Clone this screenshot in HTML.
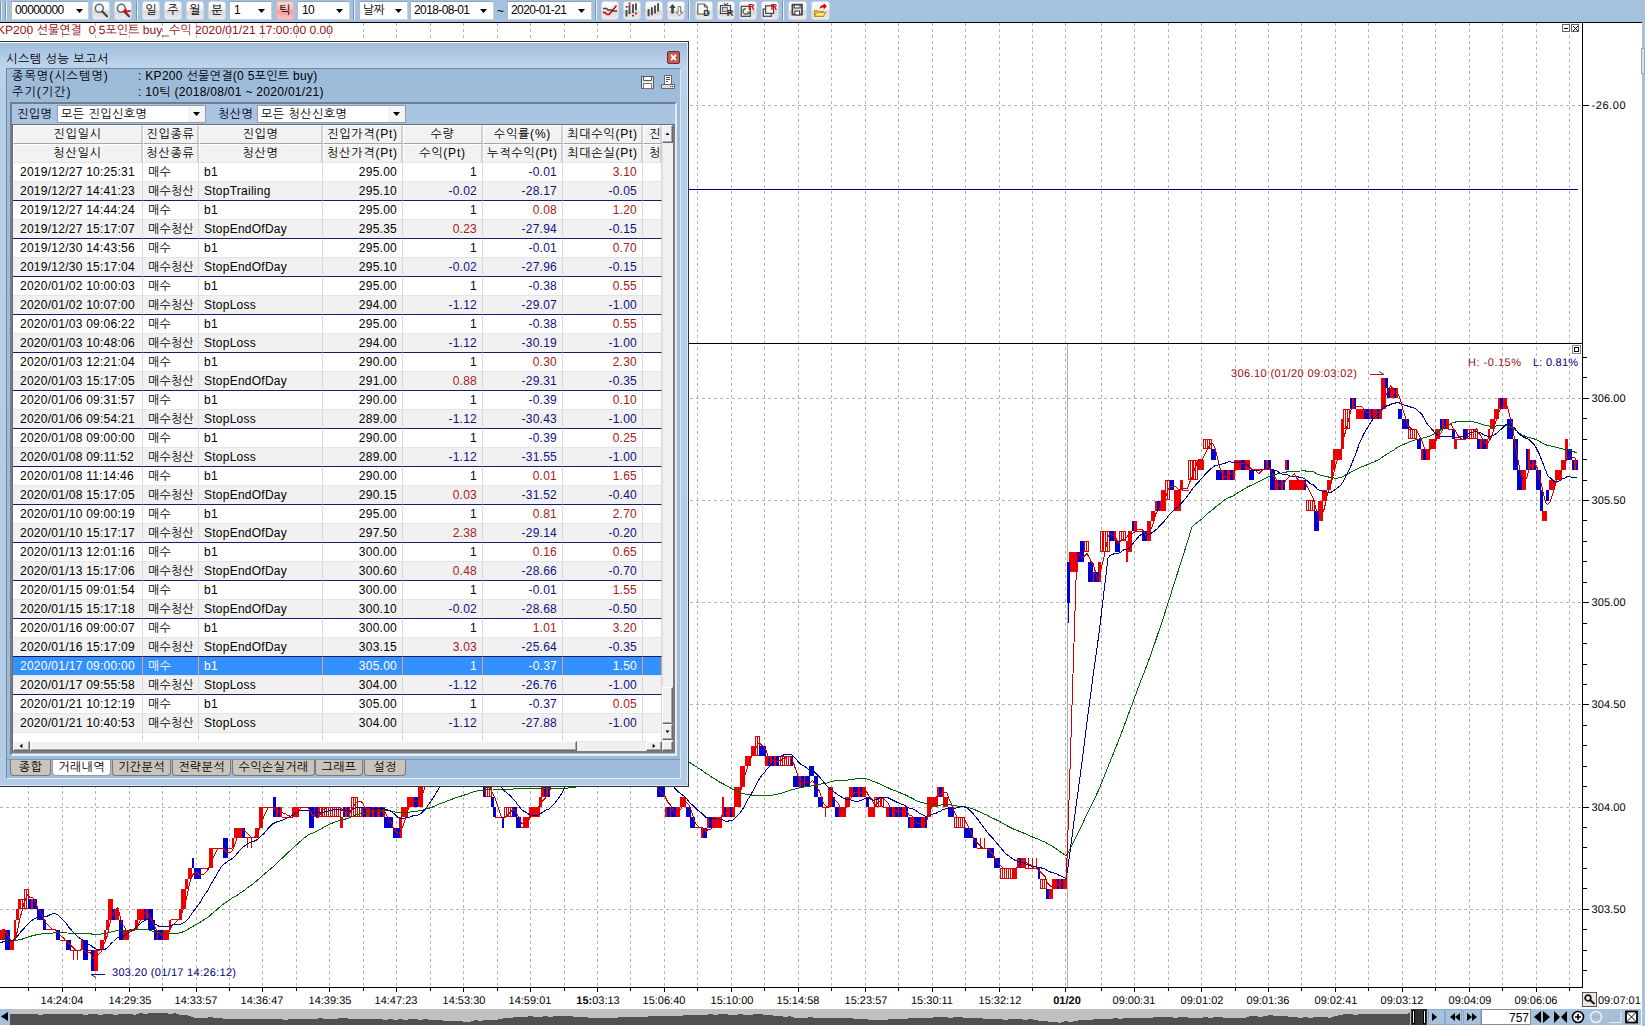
<!DOCTYPE html>
<html lang="ko"><head><meta charset="utf-8"><title>시스템 성능 보고서</title>
<style>
html,body{margin:0;padding:0;background:#fff;}
body{width:1645px;height:1026px;position:relative;overflow:hidden;font:12px 'Liberation Sans','NanumGothic',sans-serif;color:#000;}
div,span{box-sizing:border-box;}
.abs{position:absolute;}
</style></head><body>
<svg id="chart" width="1645" height="1026" viewBox="0 0 1645 1026" style="position:absolute;left:0;top:0" shape-rendering="crispEdges">
<rect x="0" y="23" width="1642" height="1003" fill="#fff"/>
<path d="M28.5 23V987M62.5 23V987M95.5 23V987M129.5 23V987M162.5 23V987M196.5 23V987M229.5 23V987M262.5 23V987M296.5 23V987M329.5 23V987M363.5 23V987M396.5 23V987M430.5 23V987M463.5 23V987M497.5 23V987M530.5 23V987M564.5 23V987M597.5 23V987M630.5 23V987M664.5 23V987M697.5 23V987M731.5 23V987M764.5 23V987M798.5 23V987M831.5 23V987M865.5 23V987M898.5 23V987M932.5 23V987M965.5 23V987M999.5 23V987M1032.5 23V987M1065.5 23V987M1101.5 23V987M1134.5 23V987M1168.5 23V987M1201.5 23V987M1235.5 23V987M1268.5 23V987M1301.5 23V987M1335.5 23V987M1368.5 23V987M1402.5 23V987M1435.5 23V987M1469.5 23V987M1502.5 23V987M1536.5 23V987M1569.5 23V987" stroke="#b4b4b4" stroke-width="1" stroke-dasharray="3 3" fill="none"/>
<path d="M0 105.5H1582M0 398.5H1582M0 500.5H1582M0 602.5H1582M0 704.5H1582M0 807.5H1582M0 909.5H1582" stroke="#b4b4b4" stroke-width="1" stroke-dasharray="3 3" fill="none"/>
<path d="M1067.5 344V987" stroke="#b0b0b0" stroke-width="1"/>
<path d="M0 22.5H1642M0 343.5H1582M0 987.5H1583M1582.5 22V988" stroke="#000" stroke-width="1" fill="none"/>
<path d="M1583 357.5h4M1583 377.5h4M1583 398.5h6M1583 418.5h4M1583 439.5h4M1583 459.5h4M1583 480.5h4M1583 500.5h6M1583 520.5h4M1583 541.5h4M1583 561.5h4M1583 582.5h4M1583 602.5h6M1583 623.5h4M1583 643.5h4M1583 664.5h4M1583 684.5h4M1583 704.5h6M1583 725.5h4M1583 745.5h4M1583 766.5h4M1583 786.5h4M1583 807.5h6M1583 827.5h4M1583 847.5h4M1583 868.5h4M1583 888.5h4M1583 909.5h6M1583 929.5h4M1583 950.5h4M1583 970.5h4M1583 105.5h6" stroke="#000" stroke-width="1" fill="none"/>
<path d="M28.5 988v3M62.5 988v4M95.5 988v3M129.5 988v4M162.5 988v3M196.5 988v4M229.5 988v3M262.5 988v4M296.5 988v3M329.5 988v4M363.5 988v3M396.5 988v4M430.5 988v3M463.5 988v4M497.5 988v3M530.5 988v4M564.5 988v3M597.5 988v4M630.5 988v3M664.5 988v4M697.5 988v3M731.5 988v4M764.5 988v3M798.5 988v4M831.5 988v3M865.5 988v4M898.5 988v3M932.5 988v4M965.5 988v3M999.5 988v4M1032.5 988v3M1065.5 988v4M1101.5 988v3M1134.5 988v4M1168.5 988v3M1201.5 988v4M1235.5 988v3M1268.5 988v4M1301.5 988v3M1335.5 988v4M1368.5 988v3M1402.5 988v4M1435.5 988v3M1469.5 988v4M1502.5 988v3M1536.5 988v4M1569.5 988v3" stroke="#000" stroke-width="1" fill="none"/>
<path d="M0 189.5H1578" stroke="#000080" stroke-width="1.4"/>
<g shape-rendering="crispEdges">
<path d="M45.2 929.7h2.6M47.3 929.7h2.6M49.4 929.7h2.6M51.5 929.7h2.6M53.5 929.7h2.6M59.8 940.0h2.6M61.9 940.0h2.6M64.0 940.0h2.6M70.3 950.2h2.6M72.4 950.2h2.6M73.7 950.2V960.4M74.5 950.2h2.6M76.6 950.2h2.6M77.9 950.2V960.4M78.7 950.2h2.6M87.0 950.2h2.6M89.1 950.2h2.6M97.5 950.2h2.6M128.9 929.7h2.6M131.0 929.7h2.6M133.1 929.7h2.6M170.8 919.5h2.6M172.9 919.5h2.6M175.0 919.5h2.6M177.1 919.5h2.6M200.1 868.4h2.6M202.2 868.4h2.6M204.3 868.4h2.6M206.4 868.4h2.6M212.7 848.0h2.6M214.8 848.0h2.6M216.9 848.0h2.6M218.9 848.0h2.6M221.0 848.0h2.6M227.3 848.0h2.6M229.4 848.0h2.6M244.1 837.8h2.6M246.2 837.8h2.6M247.5 837.8V848.0M248.3 837.8h2.6M250.4 837.8h2.6M251.7 837.8V848.0M252.4 837.8h2.6M262.9 807.1h2.6M265.0 807.1h2.6M267.1 807.1h2.6M269.2 807.1h2.6M271.3 807.1h2.6M281.8 817.3h2.6M283.9 817.3h2.6M285.9 817.3h2.6M288.0 817.3h2.6M290.1 817.3h2.6M298.5 807.1h2.6M300.6 807.1h2.6M302.7 807.1h2.6M304.8 807.1h2.6M306.9 807.1h2.6M495.3 817.3h2.6M497.4 817.3h2.6M499.5 817.3h2.6M520.5 827.5h2.6M694.2 827.5h2.6M696.3 827.5h2.6M698.4 827.5h2.6M822.0 807.1h2.6M824.0 807.1h2.6M825.3 807.1V817.3M826.1 807.1h2.6M882.7 807.1h2.6M884.8 807.1h2.6M886.1 807.1V817.3M976.9 848.0h2.6M979.0 848.0h2.6M980.3 837.8V848.0M981.1 848.0h2.6M983.2 848.0h2.6M984.5 837.8V848.0M985.3 848.0h2.6M1025.0 868.4h2.6M1027.1 868.4h2.6M1028.4 858.2V868.4M1029.2 868.4h2.6M1031.3 868.4h2.6M1032.6 858.2V868.4M1033.4 868.4h2.6M1035.5 868.4h2.6M1036.8 858.2V868.4M1136.0 531.2h2.6M1138.1 531.2h2.6M1140.2 531.2h2.6M1182.1 490.3h2.6M1184.2 490.3h2.6M1186.3 490.3h2.6M1253.3 469.8h2.6M1255.4 469.8h2.6M1257.5 469.8h2.6M1259.5 469.8h2.6M1261.6 469.8h2.6M1448.0 429.0h2.6M1450.1 429.0h2.6M1456.4 439.2h2.6M1458.5 439.2h2.6M1460.5 439.2h2.6" stroke="#e00000" stroke-width="1" fill="none"/>
<path d="M1068.2 561.8V623.1" stroke="#0000c8" stroke-width="1" fill="none"/>
<path d="M20.5 899.5h2V908.5h-2zM22.5 899.5h2V908.5h-2zM24.5 889.5h2V908.5h-2zM26.5 889.5h2V908.5h-2zM319.5 807.5h2V816.5h-2zM322.5 807.5h2V816.5h-2zM324.5 807.5h2V816.5h-2zM326.5 807.5h2V816.5h-2zM328.5 807.5h2V816.5h-2zM330.5 807.5h2V816.5h-2zM332.5 807.5h2V816.5h-2zM334.5 807.5h2V816.5h-2zM336.5 807.5h2V816.5h-2zM338.5 807.5h2V816.5h-2zM349.5 807.5h2V816.5h-2zM351.5 797.5h2V816.5h-2zM353.5 797.5h2V816.5h-2zM355.5 797.5h2V816.5h-2zM357.5 807.5h2V816.5h-2zM359.5 807.5h2V816.5h-2zM485.5 787.5h2V796.5h-2zM487.5 787.5h2V796.5h-2zM489.5 787.5h2V796.5h-2zM504.5 807.5h2V816.5h-2zM506.5 807.5h2V816.5h-2zM508.5 807.5h2V816.5h-2zM510.5 807.5h2V816.5h-2zM755.5 736.5h2V755.5h-2zM757.5 736.5h2V755.5h-2zM778.5 756.5h2V765.5h-2zM780.5 756.5h2V765.5h-2zM782.5 756.5h2V765.5h-2zM784.5 756.5h2V765.5h-2zM786.5 756.5h2V765.5h-2zM788.5 756.5h2V765.5h-2zM874.5 797.5h2V806.5h-2zM876.5 797.5h2V806.5h-2zM878.5 797.5h2V806.5h-2zM881.5 797.5h2V806.5h-2zM954.5 817.5h2V827.5h-2zM956.5 817.5h2V827.5h-2zM958.5 817.5h2V827.5h-2zM960.5 817.5h2V827.5h-2zM962.5 817.5h2V827.5h-2zM1000.5 868.5h2V878.5h-2zM1002.5 868.5h2V878.5h-2zM1004.5 868.5h2V878.5h-2zM1006.5 868.5h2V878.5h-2zM1008.5 868.5h2V878.5h-2zM1010.5 868.5h2V878.5h-2zM1040.5 879.5h2V888.5h-2zM1042.5 879.5h2V888.5h-2zM1044.5 879.5h2V888.5h-2zM1084.5 541.5h2V551.5h-2zM1086.5 541.5h2V551.5h-2zM1100.5 531.5h2V551.5h-2zM1103.5 531.5h2V551.5h-2zM1105.5 531.5h2V551.5h-2zM1107.5 531.5h2V551.5h-2zM1119.5 531.5h2V540.5h-2zM1121.5 531.5h2V540.5h-2zM1123.5 531.5h2V540.5h-2zM1165.5 480.5h2V499.5h-2zM1167.5 480.5h2V499.5h-2zM1188.5 460.5h2V479.5h-2zM1190.5 460.5h2V479.5h-2zM1193.5 460.5h2V479.5h-2zM1195.5 460.5h2V479.5h-2zM1203.5 439.5h2V448.5h-2zM1205.5 439.5h2V448.5h-2zM1207.5 439.5h2V448.5h-2zM1209.5 439.5h2V448.5h-2zM1306.5 500.5h2V510.5h-2zM1308.5 500.5h2V510.5h-2zM1310.5 500.5h2V510.5h-2zM1312.5 500.5h2V510.5h-2zM1343.5 409.5h2V428.5h-2zM1345.5 409.5h2V428.5h-2zM1347.5 409.5h2V428.5h-2zM1408.5 429.5h2V438.5h-2zM1410.5 429.5h2V438.5h-2zM1412.5 429.5h2V438.5h-2zM1414.5 429.5h2V438.5h-2zM1467.5 429.5h2V438.5h-2zM1469.5 429.5h2V438.5h-2zM1471.5 429.5h2V438.5h-2zM1473.5 429.5h2V438.5h-2zM1475.5 429.5h2V438.5h-2z" stroke="#e00000" stroke-width="1" fill="#fff"/>
<path d="M-7.2 929.7h2.6V940.0h-2.6zM-5.1 929.7h2.6V940.0h-2.6zM-3.0 929.7h2.6V940.0h-2.6zM-0.9 929.7h2.6V940.0h-2.6zM1.2 929.7h2.6V940.0h-2.6zM3.3 929.7h2.6V940.0h-2.6zM9.6 940.0h2.6V950.2h-2.6zM11.7 940.0h2.6V950.2h-2.6zM13.8 919.5h2.6V940.0h-2.6zM15.9 909.3h2.6V919.5h-2.6zM17.9 899.1h2.6V909.3h-2.6zM30.5 899.1h2.6V909.3h-2.6zM80.8 940.0h2.6V950.2h-2.6zM93.3 950.2h2.6V970.6h-2.6zM95.4 950.2h2.6V970.6h-2.6zM99.6 940.0h2.6V950.2h-2.6zM101.7 940.0h2.6V950.2h-2.6zM103.8 929.7h2.6V940.0h-2.6zM105.9 919.5h2.6V929.7h-2.6zM108.0 899.1h2.6V919.5h-2.6zM110.1 899.1h2.6V919.5h-2.6zM114.3 909.3h2.6V919.5h-2.6zM116.4 909.3h2.6V919.5h-2.6zM122.6 929.7h2.6V940.0h-2.6zM124.7 929.7h2.6V940.0h-2.6zM126.8 929.7h2.6V940.0h-2.6zM135.2 919.5h2.6V929.7h-2.6zM137.3 909.3h2.6V919.5h-2.6zM139.4 909.3h2.6V919.5h-2.6zM141.5 909.3h2.6V919.5h-2.6zM145.7 909.3h2.6V919.5h-2.6zM156.1 929.7h2.6V940.0h-2.6zM162.4 929.7h2.6V940.0h-2.6zM164.5 929.7h2.6V940.0h-2.6zM166.6 929.7h2.6V940.0h-2.6zM168.7 919.5h2.6V929.7h-2.6zM179.2 909.3h2.6V919.5h-2.6zM181.3 888.9h2.6V909.3h-2.6zM183.4 888.9h2.6V909.3h-2.6zM185.4 878.6h2.6V888.9h-2.6zM187.5 868.4h2.6V878.6h-2.6zM189.6 868.4h2.6V878.6h-2.6zM208.5 848.0h2.6V868.4h-2.6zM210.6 848.0h2.6V868.4h-2.6zM231.5 837.8h2.6V848.0h-2.6zM233.6 827.5h2.6V837.8h-2.6zM235.7 827.5h2.6V837.8h-2.6zM237.8 827.5h2.6V837.8h-2.6zM239.9 827.5h2.6V837.8h-2.6zM254.5 827.5h2.6V837.8h-2.6zM256.6 827.5h2.6V837.8h-2.6zM258.7 807.1h2.6V827.5h-2.6zM260.8 807.1h2.6V827.5h-2.6zM275.5 807.1h2.6V817.3h-2.6zM279.7 807.1h2.6V817.3h-2.6zM292.2 807.1h2.6V817.3h-2.6zM294.3 807.1h2.6V817.3h-2.6zM296.4 807.1h2.6V817.3h-2.6zM313.2 807.1h2.6V817.3h-2.6zM317.4 807.1h2.6V817.3h-2.6zM340.4 817.3h2.6V827.5h-2.6zM344.6 807.1h2.6V817.3h-2.6zM361.3 807.1h2.6V817.3h-2.6zM365.5 807.1h2.6V817.3h-2.6zM367.6 807.1h2.6V817.3h-2.6zM371.8 807.1h2.6V817.3h-2.6zM376.0 807.1h2.6V817.3h-2.6zM378.1 807.1h2.6V817.3h-2.6zM382.3 807.1h2.6V817.3h-2.6zM399.0 817.3h2.6V837.8h-2.6zM401.1 807.1h2.6V817.3h-2.6zM403.2 807.1h2.6V817.3h-2.6zM405.3 807.1h2.6V817.3h-2.6zM407.4 796.9h2.6V807.1h-2.6zM409.5 796.9h2.6V807.1h-2.6zM411.6 796.9h2.6V807.1h-2.6zM417.9 786.7h2.6V807.1h-2.6zM419.9 786.7h2.6V807.1h-2.6zM422.0 776.4h2.6V786.7h-2.6zM424.1 766.2h2.6V776.4h-2.6zM426.2 766.2h2.6V776.4h-2.6zM428.3 766.2h2.6V776.4h-2.6zM430.4 766.2h2.6V776.4h-2.6zM432.5 766.2h2.6V776.4h-2.6zM434.6 766.2h2.6V776.4h-2.6zM436.7 766.2h2.6V776.4h-2.6zM438.8 756.0h2.6V766.2h-2.6zM445.1 756.0h2.6V766.2h-2.6zM449.3 756.0h2.6V766.2h-2.6zM451.4 756.0h2.6V766.2h-2.6zM455.5 756.0h2.6V766.2h-2.6zM461.8 766.2h2.6V776.4h-2.6zM463.9 766.2h2.6V776.4h-2.6zM468.1 766.2h2.6V776.4h-2.6zM470.2 766.2h2.6V776.4h-2.6zM474.4 766.2h2.6V776.4h-2.6zM476.5 776.4h2.6V786.7h-2.6zM478.6 776.4h2.6V786.7h-2.6zM522.5 817.3h2.6V827.5h-2.6zM524.6 817.3h2.6V827.5h-2.6zM526.7 817.3h2.6V827.5h-2.6zM528.8 807.1h2.6V817.3h-2.6zM530.9 807.1h2.6V817.3h-2.6zM533.0 807.1h2.6V817.3h-2.6zM535.1 807.1h2.6V817.3h-2.6zM537.2 807.1h2.6V817.3h-2.6zM539.3 796.9h2.6V807.1h-2.6zM541.4 786.7h2.6V796.9h-2.6zM545.6 786.7h2.6V796.9h-2.6zM549.8 766.2h2.6V776.4h-2.6zM551.9 766.2h2.6V776.4h-2.6zM554.0 766.2h2.6V776.4h-2.6zM556.0 766.2h2.6V776.4h-2.6zM558.1 766.2h2.6V776.4h-2.6zM560.2 766.2h2.6V776.4h-2.6zM562.3 745.8h2.6V756.0h-2.6zM564.4 745.8h2.6V756.0h-2.6zM566.5 745.8h2.6V756.0h-2.6zM568.6 745.8h2.6V756.0h-2.6zM570.7 745.8h2.6V756.0h-2.6zM572.8 745.8h2.6V756.0h-2.6zM574.9 745.8h2.6V756.0h-2.6zM577.0 745.8h2.6V756.0h-2.6zM583.3 735.6h2.6V745.8h-2.6zM585.4 735.6h2.6V745.8h-2.6zM589.5 735.6h2.6V745.8h-2.6zM591.6 735.6h2.6V745.8h-2.6zM593.7 735.6h2.6V745.8h-2.6zM600.0 735.6h2.6V745.8h-2.6zM602.1 735.6h2.6V745.8h-2.6zM608.4 725.3h2.6V735.6h-2.6zM612.6 725.3h2.6V735.6h-2.6zM614.7 725.3h2.6V735.6h-2.6zM618.9 725.3h2.6V735.6h-2.6zM623.0 725.3h2.6V735.6h-2.6zM625.1 725.3h2.6V735.6h-2.6zM629.3 725.3h2.6V735.6h-2.6zM631.4 725.3h2.6V735.6h-2.6zM664.9 807.1h2.6V817.3h-2.6zM669.1 807.1h2.6V817.3h-2.6zM675.4 807.1h2.6V817.3h-2.6zM677.5 807.1h2.6V817.3h-2.6zM679.6 796.9h2.6V807.1h-2.6zM681.7 796.9h2.6V807.1h-2.6zM683.8 796.9h2.6V807.1h-2.6zM700.5 827.5h2.6V837.8h-2.6zM706.8 817.3h2.6V827.5h-2.6zM711.0 817.3h2.6V827.5h-2.6zM713.1 817.3h2.6V827.5h-2.6zM715.2 817.3h2.6V827.5h-2.6zM717.3 817.3h2.6V827.5h-2.6zM719.4 817.3h2.6V827.5h-2.6zM721.5 796.9h2.6V817.3h-2.6zM725.6 807.1h2.6V817.3h-2.6zM727.7 807.1h2.6V817.3h-2.6zM731.9 807.1h2.6V817.3h-2.6zM734.0 786.7h2.6V807.1h-2.6zM736.1 786.7h2.6V807.1h-2.6zM738.2 786.7h2.6V807.1h-2.6zM740.3 766.2h2.6V786.7h-2.6zM742.4 766.2h2.6V786.7h-2.6zM744.5 756.0h2.6V766.2h-2.6zM746.6 756.0h2.6V766.2h-2.6zM748.7 756.0h2.6V766.2h-2.6zM750.8 745.8h2.6V756.0h-2.6zM752.9 745.8h2.6V756.0h-2.6zM765.4 756.0h2.6V766.2h-2.6zM769.6 756.0h2.6V766.2h-2.6zM773.8 756.0h2.6V766.2h-2.6zM798.9 776.4h2.6V786.7h-2.6zM803.1 776.4h2.6V786.7h-2.6zM828.2 786.7h2.6V807.1h-2.6zM830.3 786.7h2.6V807.1h-2.6zM838.7 807.1h2.6V817.3h-2.6zM840.8 807.1h2.6V817.3h-2.6zM842.9 807.1h2.6V817.3h-2.6zM845.0 796.9h2.6V807.1h-2.6zM847.1 796.9h2.6V807.1h-2.6zM849.2 786.7h2.6V796.9h-2.6zM851.3 786.7h2.6V796.9h-2.6zM857.5 786.7h2.6V796.9h-2.6zM861.7 786.7h2.6V796.9h-2.6zM863.8 786.7h2.6V796.9h-2.6zM868.0 807.1h2.6V817.3h-2.6zM870.1 807.1h2.6V817.3h-2.6zM872.2 807.1h2.6V817.3h-2.6zM886.9 807.1h2.6V817.3h-2.6zM891.0 807.1h2.6V817.3h-2.6zM893.1 807.1h2.6V817.3h-2.6zM897.3 807.1h2.6V817.3h-2.6zM901.5 807.1h2.6V817.3h-2.6zM903.6 807.1h2.6V817.3h-2.6zM909.9 817.3h2.6V827.5h-2.6zM912.0 817.3h2.6V827.5h-2.6zM920.4 817.3h2.6V827.5h-2.6zM922.5 817.3h2.6V827.5h-2.6zM926.6 796.9h2.6V817.3h-2.6zM928.7 796.9h2.6V817.3h-2.6zM930.8 796.9h2.6V807.1h-2.6zM932.9 796.9h2.6V807.1h-2.6zM935.0 796.9h2.6V807.1h-2.6zM937.1 786.7h2.6V796.9h-2.6zM941.3 786.7h2.6V796.9h-2.6zM943.4 796.9h2.6V807.1h-2.6zM945.5 796.9h2.6V807.1h-2.6zM1012.5 868.4h2.6V878.6h-2.6zM1014.6 868.4h2.6V878.6h-2.6zM1016.7 858.2h2.6V868.4h-2.6zM1020.9 858.2h2.6V868.4h-2.6zM1023.0 858.2h2.6V868.4h-2.6zM1048.1 888.9h2.6V899.1h-2.6zM1050.2 888.9h2.6V899.1h-2.6zM1052.3 878.6h2.6V888.9h-2.6zM1054.4 878.6h2.6V888.9h-2.6zM1058.5 878.6h2.6V888.9h-2.6zM1062.7 878.6h2.6V888.9h-2.6zM1064.8 878.6h2.6V888.9h-2.6zM1069.0 551.6h2.6V572.0h-2.6zM1071.1 551.6h2.6V572.0h-2.6zM1073.2 551.6h2.6V572.0h-2.6zM1075.3 551.6h2.6V572.0h-2.6zM1092.0 572.0h2.6V582.3h-2.6zM1098.3 561.8h2.6V582.3h-2.6zM1113.0 531.2h2.6V541.4h-2.6zM1125.5 541.4h2.6V561.8h-2.6zM1127.6 531.2h2.6V551.6h-2.6zM1129.7 531.2h2.6V551.6h-2.6zM1133.9 520.9h2.6V531.2h-2.6zM1146.5 520.9h2.6V541.4h-2.6zM1148.6 520.9h2.6V541.4h-2.6zM1150.7 510.7h2.6V520.9h-2.6zM1152.8 510.7h2.6V520.9h-2.6zM1154.9 500.5h2.6V510.7h-2.6zM1159.0 500.5h2.6V510.7h-2.6zM1161.1 490.3h2.6V510.7h-2.6zM1163.2 490.3h2.6V510.7h-2.6zM1173.7 490.3h2.6V510.7h-2.6zM1175.8 490.3h2.6V510.7h-2.6zM1177.9 490.3h2.6V510.7h-2.6zM1180.0 480.1h2.6V490.3h-2.6zM1196.7 459.6h2.6V469.8h-2.6zM1198.8 459.6h2.6V469.8h-2.6zM1200.9 459.6h2.6V469.8h-2.6zM1221.9 469.8h2.6V480.1h-2.6zM1226.0 469.8h2.6V480.1h-2.6zM1228.1 469.8h2.6V480.1h-2.6zM1232.3 469.8h2.6V480.1h-2.6zM1234.4 459.6h2.6V469.8h-2.6zM1236.5 459.6h2.6V469.8h-2.6zM1238.6 459.6h2.6V469.8h-2.6zM1244.9 459.6h2.6V469.8h-2.6zM1247.0 459.6h2.6V469.8h-2.6zM1265.8 459.6h2.6V469.8h-2.6zM1274.2 480.1h2.6V490.3h-2.6zM1276.3 480.1h2.6V490.3h-2.6zM1280.5 480.1h2.6V490.3h-2.6zM1284.7 459.6h2.6V469.8h-2.6zM1288.9 480.1h2.6V490.3h-2.6zM1291.0 480.1h2.6V490.3h-2.6zM1293.0 480.1h2.6V490.3h-2.6zM1295.1 480.1h2.6V490.3h-2.6zM1297.2 480.1h2.6V490.3h-2.6zM1299.3 480.1h2.6V490.3h-2.6zM1301.4 480.1h2.6V490.3h-2.6zM1318.2 500.5h2.6V520.9h-2.6zM1320.3 500.5h2.6V520.9h-2.6zM1322.4 490.3h2.6V500.5h-2.6zM1324.5 490.3h2.6V500.5h-2.6zM1326.5 480.1h2.6V490.3h-2.6zM1328.6 480.1h2.6V490.3h-2.6zM1330.7 459.6h2.6V480.1h-2.6zM1332.8 449.4h2.6V469.8h-2.6zM1334.9 449.4h2.6V459.6h-2.6zM1337.0 449.4h2.6V459.6h-2.6zM1339.1 449.4h2.6V459.6h-2.6zM1341.2 418.7h2.6V449.4h-2.6zM1351.7 398.3h2.6V408.5h-2.6zM1355.9 408.5h2.6V418.7h-2.6zM1358.0 408.5h2.6V418.7h-2.6zM1360.0 408.5h2.6V418.7h-2.6zM1362.1 408.5h2.6V418.7h-2.6zM1368.4 408.5h2.6V418.7h-2.6zM1372.6 408.5h2.6V418.7h-2.6zM1374.7 408.5h2.6V418.7h-2.6zM1378.9 408.5h2.6V418.7h-2.6zM1381.0 377.9h2.6V408.5h-2.6zM1383.1 377.9h2.6V408.5h-2.6zM1389.4 388.1h2.6V398.3h-2.6zM1391.5 388.1h2.6V398.3h-2.6zM1395.6 388.1h2.6V398.3h-2.6zM1420.8 449.4h2.6V459.6h-2.6zM1425.0 449.4h2.6V459.6h-2.6zM1427.0 449.4h2.6V459.6h-2.6zM1429.1 439.2h2.6V449.4h-2.6zM1431.2 439.2h2.6V449.4h-2.6zM1433.3 439.2h2.6V449.4h-2.6zM1435.4 429.0h2.6V439.2h-2.6zM1437.5 429.0h2.6V439.2h-2.6zM1441.7 418.7h2.6V429.0h-2.6zM1445.9 418.7h2.6V429.0h-2.6zM1454.3 439.2h2.6V449.4h-2.6zM1479.4 439.2h2.6V449.4h-2.6zM1485.7 439.2h2.6V449.4h-2.6zM1487.8 429.0h2.6V439.2h-2.6zM1489.9 418.7h2.6V429.0h-2.6zM1492.0 418.7h2.6V429.0h-2.6zM1494.0 408.5h2.6V418.7h-2.6zM1496.1 408.5h2.6V418.7h-2.6zM1498.2 398.3h2.6V408.5h-2.6zM1502.4 398.3h2.6V408.5h-2.6zM1504.5 398.3h2.6V408.5h-2.6zM1521.3 469.8h2.6V490.3h-2.6zM1523.4 469.8h2.6V490.3h-2.6zM1527.5 449.4h2.6V469.8h-2.6zM1531.7 459.6h2.6V469.8h-2.6zM1542.2 510.7h2.6V520.9h-2.6zM1544.3 510.7h2.6V520.9h-2.6zM1548.5 480.1h2.6V490.3h-2.6zM1550.6 480.1h2.6V490.3h-2.6zM1552.7 480.1h2.6V490.3h-2.6zM1554.8 469.8h2.6V480.1h-2.6zM1556.9 469.8h2.6V480.1h-2.6zM1559.0 469.8h2.6V480.1h-2.6zM1561.0 459.6h2.6V469.8h-2.6zM1563.1 459.6h2.6V469.8h-2.6zM1565.2 439.2h2.6V459.6h-2.6zM1573.6 459.6h2.6V469.8h-2.6z" fill="#f00000"/>
<path d="M5.4 929.7h2.6V950.2h-2.6zM7.5 929.7h2.6V950.2h-2.6zM28.4 899.1h2.6V909.3h-2.6zM32.6 899.1h2.6V909.3h-2.6zM34.7 899.1h2.6V909.3h-2.6zM36.8 909.3h2.6V919.5h-2.6zM38.9 909.3h2.6V919.5h-2.6zM41.0 909.3h2.6V919.5h-2.6zM43.1 919.5h2.6V929.7h-2.6zM55.6 929.7h2.6V940.0h-2.6zM57.7 929.7h2.6V940.0h-2.6zM66.1 940.0h2.6V950.2h-2.6zM68.2 940.0h2.6V950.2h-2.6zM82.9 940.0h2.6V960.4h-2.6zM85.0 940.0h2.6V960.4h-2.6zM91.2 950.2h2.6V970.6h-2.6zM112.2 909.3h2.6V919.5h-2.6zM118.5 919.5h2.6V940.0h-2.6zM120.5 919.5h2.6V940.0h-2.6zM143.6 909.3h2.6V919.5h-2.6zM147.8 909.3h2.6V929.7h-2.6zM149.9 909.3h2.6V929.7h-2.6zM151.9 919.5h2.6V929.7h-2.6zM154.0 929.7h2.6V940.0h-2.6zM158.2 929.7h2.6V940.0h-2.6zM160.3 929.7h2.6V940.0h-2.6zM191.7 858.2h2.6V868.4h-2.6zM193.8 868.4h2.6V878.6h-2.6zM195.9 868.4h2.6V878.6h-2.6zM198.0 868.4h2.6V878.6h-2.6zM223.1 837.8h2.6V858.2h-2.6zM225.2 837.8h2.6V858.2h-2.6zM242.0 827.5h2.6V837.8h-2.6zM273.4 796.9h2.6V817.3h-2.6zM277.6 807.1h2.6V817.3h-2.6zM309.0 807.1h2.6V827.5h-2.6zM311.1 807.1h2.6V827.5h-2.6zM315.3 807.1h2.6V817.3h-2.6zM342.5 807.1h2.6V817.3h-2.6zM346.7 807.1h2.6V817.3h-2.6zM363.4 807.1h2.6V817.3h-2.6zM369.7 807.1h2.6V817.3h-2.6zM373.9 807.1h2.6V817.3h-2.6zM380.2 807.1h2.6V817.3h-2.6zM384.4 817.3h2.6V827.5h-2.6zM386.4 817.3h2.6V827.5h-2.6zM388.5 817.3h2.6V827.5h-2.6zM390.6 817.3h2.6V827.5h-2.6zM392.7 827.5h2.6V837.8h-2.6zM394.8 827.5h2.6V837.8h-2.6zM396.9 827.5h2.6V837.8h-2.6zM413.7 796.9h2.6V807.1h-2.6zM415.8 796.9h2.6V807.1h-2.6zM440.9 756.0h2.6V766.2h-2.6zM443.0 756.0h2.6V766.2h-2.6zM447.2 756.0h2.6V766.2h-2.6zM453.4 756.0h2.6V766.2h-2.6zM457.6 756.0h2.6V766.2h-2.6zM459.7 766.2h2.6V776.4h-2.6zM466.0 766.2h2.6V776.4h-2.6zM472.3 766.2h2.6V776.4h-2.6zM480.7 776.4h2.6V786.7h-2.6zM482.8 786.7h2.6V796.9h-2.6zM491.1 796.9h2.6V807.1h-2.6zM493.2 807.1h2.6V817.3h-2.6zM501.6 817.3h2.6V827.5h-2.6zM512.1 807.1h2.6V817.3h-2.6zM514.2 807.1h2.6V817.3h-2.6zM516.3 817.3h2.6V827.5h-2.6zM518.4 817.3h2.6V827.5h-2.6zM543.5 786.7h2.6V796.9h-2.6zM547.7 786.7h2.6V796.9h-2.6zM579.1 735.6h2.6V745.8h-2.6zM581.2 735.6h2.6V745.8h-2.6zM587.5 735.6h2.6V745.8h-2.6zM595.8 735.6h2.6V745.8h-2.6zM597.9 735.6h2.6V745.8h-2.6zM604.2 735.6h2.6V745.8h-2.6zM606.3 725.3h2.6V735.6h-2.6zM610.5 725.3h2.6V735.6h-2.6zM616.8 725.3h2.6V735.6h-2.6zM621.0 725.3h2.6V735.6h-2.6zM627.2 725.3h2.6V735.6h-2.6zM633.5 756.0h2.6V766.2h-2.6zM635.6 756.0h2.6V766.2h-2.6zM637.7 756.0h2.6V766.2h-2.6zM639.8 756.0h2.6V766.2h-2.6zM641.9 756.0h2.6V766.2h-2.6zM644.0 756.0h2.6V766.2h-2.6zM646.1 756.0h2.6V766.2h-2.6zM648.2 776.4h2.6V786.7h-2.6zM650.3 776.4h2.6V786.7h-2.6zM652.4 776.4h2.6V786.7h-2.6zM654.5 776.4h2.6V786.7h-2.6zM656.5 786.7h2.6V796.9h-2.6zM658.6 786.7h2.6V796.9h-2.6zM660.7 786.7h2.6V796.9h-2.6zM662.8 786.7h2.6V796.9h-2.6zM667.0 807.1h2.6V817.3h-2.6zM671.2 807.1h2.6V817.3h-2.6zM673.3 807.1h2.6V817.3h-2.6zM685.9 807.1h2.6V817.3h-2.6zM688.0 807.1h2.6V817.3h-2.6zM690.0 817.3h2.6V827.5h-2.6zM692.1 817.3h2.6V827.5h-2.6zM702.6 827.5h2.6V837.8h-2.6zM704.7 827.5h2.6V837.8h-2.6zM708.9 817.3h2.6V827.5h-2.6zM723.5 807.1h2.6V817.3h-2.6zM729.8 807.1h2.6V817.3h-2.6zM759.1 745.8h2.6V756.0h-2.6zM761.2 745.8h2.6V756.0h-2.6zM763.3 745.8h2.6V756.0h-2.6zM767.5 756.0h2.6V766.2h-2.6zM771.7 756.0h2.6V766.2h-2.6zM775.9 756.0h2.6V766.2h-2.6zM790.5 756.0h2.6V766.2h-2.6zM792.6 776.4h2.6V786.7h-2.6zM794.7 776.4h2.6V786.7h-2.6zM796.8 776.4h2.6V786.7h-2.6zM801.0 776.4h2.6V786.7h-2.6zM805.2 776.4h2.6V786.7h-2.6zM807.3 776.4h2.6V786.7h-2.6zM809.4 766.2h2.6V776.4h-2.6zM811.5 766.2h2.6V776.4h-2.6zM813.6 776.4h2.6V796.9h-2.6zM815.7 776.4h2.6V796.9h-2.6zM817.8 796.9h2.6V807.1h-2.6zM819.9 796.9h2.6V807.1h-2.6zM832.4 796.9h2.6V807.1h-2.6zM834.5 807.1h2.6V817.3h-2.6zM836.6 807.1h2.6V817.3h-2.6zM853.4 786.7h2.6V796.9h-2.6zM855.5 786.7h2.6V796.9h-2.6zM859.6 786.7h2.6V796.9h-2.6zM865.9 796.9h2.6V807.1h-2.6zM889.0 807.1h2.6V817.3h-2.6zM895.2 807.1h2.6V817.3h-2.6zM899.4 807.1h2.6V817.3h-2.6zM905.7 807.1h2.6V817.3h-2.6zM907.8 817.3h2.6V827.5h-2.6zM914.1 817.3h2.6V827.5h-2.6zM916.2 817.3h2.6V827.5h-2.6zM918.3 817.3h2.6V827.5h-2.6zM924.5 817.3h2.6V827.5h-2.6zM939.2 786.7h2.6V796.9h-2.6zM947.6 807.1h2.6V817.3h-2.6zM949.7 807.1h2.6V817.3h-2.6zM951.8 807.1h2.6V817.3h-2.6zM964.3 827.5h2.6V837.8h-2.6zM966.4 827.5h2.6V837.8h-2.6zM968.5 827.5h2.6V837.8h-2.6zM970.6 827.5h2.6V837.8h-2.6zM972.7 837.8h2.6V848.0h-2.6zM974.8 837.8h2.6V848.0h-2.6zM987.4 848.0h2.6V858.2h-2.6zM989.5 848.0h2.6V858.2h-2.6zM991.5 848.0h2.6V858.2h-2.6zM993.6 858.2h2.6V868.4h-2.6zM995.7 858.2h2.6V868.4h-2.6zM997.8 858.2h2.6V868.4h-2.6zM1018.8 858.2h2.6V868.4h-2.6zM1037.6 868.4h2.6V878.6h-2.6zM1046.0 888.9h2.6V899.1h-2.6zM1056.5 878.6h2.6V888.9h-2.6zM1060.6 878.6h2.6V888.9h-2.6zM1066.9 561.8h2.6V602.7h-2.6zM1077.4 551.6h2.6V561.8h-2.6zM1079.5 541.4h2.6V561.8h-2.6zM1081.6 541.4h2.6V561.8h-2.6zM1087.9 561.8h2.6V582.3h-2.6zM1090.0 561.8h2.6V582.3h-2.6zM1094.1 572.0h2.6V582.3h-2.6zM1096.2 572.0h2.6V582.3h-2.6zM1108.8 531.2h2.6V541.4h-2.6zM1110.9 531.2h2.6V541.4h-2.6zM1115.1 541.4h2.6V551.6h-2.6zM1117.2 541.4h2.6V551.6h-2.6zM1131.8 520.9h2.6V531.2h-2.6zM1142.3 531.2h2.6V541.4h-2.6zM1144.4 531.2h2.6V541.4h-2.6zM1157.0 500.5h2.6V510.7h-2.6zM1169.5 480.1h2.6V490.3h-2.6zM1171.6 480.1h2.6V490.3h-2.6zM1211.4 449.4h2.6V459.6h-2.6zM1213.5 449.4h2.6V459.6h-2.6zM1215.6 469.8h2.6V480.1h-2.6zM1217.7 469.8h2.6V480.1h-2.6zM1219.8 469.8h2.6V480.1h-2.6zM1224.0 469.8h2.6V480.1h-2.6zM1230.2 469.8h2.6V480.1h-2.6zM1240.7 459.6h2.6V469.8h-2.6zM1242.8 459.6h2.6V469.8h-2.6zM1249.1 469.8h2.6V480.1h-2.6zM1251.2 469.8h2.6V480.1h-2.6zM1263.7 459.6h2.6V469.8h-2.6zM1267.9 459.6h2.6V469.8h-2.6zM1270.0 469.8h2.6V490.3h-2.6zM1272.1 469.8h2.6V490.3h-2.6zM1278.4 480.1h2.6V490.3h-2.6zM1282.6 480.1h2.6V490.3h-2.6zM1286.8 459.6h2.6V469.8h-2.6zM1303.5 480.1h2.6V490.3h-2.6zM1314.0 510.7h2.6V531.2h-2.6zM1316.1 510.7h2.6V531.2h-2.6zM1349.6 398.3h2.6V408.5h-2.6zM1353.8 398.3h2.6V408.5h-2.6zM1364.2 408.5h2.6V418.7h-2.6zM1366.3 408.5h2.6V418.7h-2.6zM1370.5 408.5h2.6V418.7h-2.6zM1376.8 408.5h2.6V418.7h-2.6zM1385.2 377.9h2.6V388.1h-2.6zM1387.3 388.1h2.6V398.3h-2.6zM1393.5 388.1h2.6V398.3h-2.6zM1397.7 408.5h2.6V418.7h-2.6zM1399.8 408.5h2.6V418.7h-2.6zM1401.9 418.7h2.6V429.0h-2.6zM1404.0 418.7h2.6V429.0h-2.6zM1406.1 418.7h2.6V429.0h-2.6zM1416.6 439.2h2.6V449.4h-2.6zM1418.7 439.2h2.6V449.4h-2.6zM1422.9 449.4h2.6V459.6h-2.6zM1439.6 418.7h2.6V429.0h-2.6zM1443.8 418.7h2.6V429.0h-2.6zM1452.2 429.0h2.6V439.2h-2.6zM1462.6 429.0h2.6V439.2h-2.6zM1464.7 429.0h2.6V439.2h-2.6zM1477.3 439.2h2.6V449.4h-2.6zM1481.5 439.2h2.6V449.4h-2.6zM1483.6 439.2h2.6V449.4h-2.6zM1500.3 398.3h2.6V408.5h-2.6zM1506.6 418.7h2.6V439.2h-2.6zM1508.7 418.7h2.6V439.2h-2.6zM1510.8 418.7h2.6V439.2h-2.6zM1512.9 439.2h2.6V469.8h-2.6zM1515.0 439.2h2.6V469.8h-2.6zM1517.1 469.8h2.6V490.3h-2.6zM1519.2 469.8h2.6V490.3h-2.6zM1525.5 449.4h2.6V469.8h-2.6zM1529.6 459.6h2.6V469.8h-2.6zM1533.8 459.6h2.6V469.8h-2.6zM1535.9 469.8h2.6V490.3h-2.6zM1538.0 469.8h2.6V490.3h-2.6zM1540.1 490.3h2.6V510.7h-2.6zM1546.4 490.3h2.6V500.5h-2.6zM1567.3 449.4h2.6V459.6h-2.6zM1569.4 449.4h2.6V459.6h-2.6zM1571.5 459.6h2.6V469.8h-2.6zM1575.7 459.6h2.6V469.8h-2.6z" fill="#0000d0"/>
<polyline points="-5.9,939.8 -3.8,939.8 -1.7,939.8 0.4,939.8 2.5,939.8 4.6,939.8 6.7,940.1 8.8,940.5 10.9,940.6 13.0,940.8 15.1,940.6 17.2,940.3 19.2,939.8 21.3,939.3 23.4,938.8 25.5,937.9 27.6,937.1 29.7,936.6 31.8,935.9 33.9,935.4 36.0,934.9 38.1,934.5 40.2,934.2 42.3,933.8 44.4,933.7 46.5,933.5 48.6,933.3 50.7,933.1 52.8,933.0 54.8,932.8 56.9,932.8 59.0,932.8 61.1,932.8 63.2,932.8 65.3,932.8 67.4,933.0 69.5,933.1 71.6,933.3 73.7,933.5 75.8,933.7 77.9,933.7 80.0,933.7 82.1,933.5 84.2,933.7 86.2,933.8 88.3,933.8 90.4,933.8 92.5,934.2 94.6,934.2 96.7,934.2 98.8,934.2 100.9,934.0 103.0,933.8 105.1,933.5 107.2,933.1 109.3,932.5 111.4,931.8 113.5,931.4 115.6,930.9 117.7,930.4 119.8,930.6 121.8,930.8 123.9,930.8 126.0,930.8 128.1,930.8 130.2,930.8 132.3,930.4 134.4,930.1 136.5,929.7 138.6,929.2 140.7,929.1 142.8,929.1 144.9,929.4 147.0,929.6 149.1,930.1 151.2,930.8 153.2,931.4 155.3,932.0 157.4,932.5 159.5,933.0 161.6,933.5 163.7,933.7 165.8,933.8 167.9,934.0 170.0,933.8 172.1,933.7 174.2,933.5 176.3,933.3 178.4,933.1 180.5,932.8 182.6,932.0 184.7,931.1 186.8,930.1 188.8,928.9 190.9,927.7 193.0,926.3 195.1,925.1 197.2,923.9 199.3,922.8 201.4,921.4 203.5,920.0 205.6,918.7 207.7,917.5 209.8,915.6 211.9,913.7 214.0,912.0 216.1,910.3 218.2,908.3 220.2,906.6 222.3,904.9 224.4,903.3 226.5,902.0 228.6,900.4 230.7,899.1 232.8,897.7 234.9,896.5 237.0,895.3 239.1,893.8 241.2,892.4 243.3,891.2 245.4,889.5 247.5,887.8 249.6,886.3 251.7,884.8 253.8,883.2 255.8,881.5 257.9,879.8 260.0,877.8 262.1,875.9 264.2,874.2 266.3,872.5 268.4,870.8 270.5,868.9 272.6,867.2 274.7,865.4 276.8,863.3 278.9,861.4 281.0,859.2 283.1,857.3 285.2,855.3 287.2,853.3 289.3,851.4 291.4,849.5 293.5,847.5 295.6,845.6 297.7,843.7 299.8,841.8 301.9,840.0 304.0,838.1 306.1,836.4 308.2,835.0 310.3,834.0 312.4,833.2 314.5,832.1 316.6,831.3 318.7,830.3 320.8,829.1 322.8,827.9 324.9,826.7 327.0,825.7 329.1,824.6 331.2,823.6 333.3,822.6 335.4,821.9 337.5,821.2 339.6,820.6 341.7,820.0 343.8,819.5 345.9,818.9 348.0,818.3 350.1,817.5 352.2,816.5 354.2,815.6 356.3,814.8 358.4,814.3 360.5,813.9 362.6,813.6 364.7,813.4 366.8,813.1 368.9,812.6 371.0,812.2 373.1,811.7 375.2,811.4 377.3,810.8 379.4,810.3 381.5,810.2 383.6,809.8 385.7,810.2 387.8,810.5 389.8,810.8 391.9,811.2 394.0,811.7 396.1,812.2 398.2,812.7 400.3,812.7 402.4,812.7 404.5,812.6 406.6,812.6 408.7,812.2 410.8,811.9 412.9,811.5 415.0,811.4 417.1,811.2 419.2,810.8 421.2,810.5 423.3,810.0 425.4,809.3 427.5,808.6 429.6,808.0 431.7,807.3 433.8,806.6 435.9,805.6 438.0,804.5 440.1,803.7 442.2,802.8 444.3,802.2 446.4,801.3 448.5,800.6 450.6,799.8 452.7,798.9 454.8,798.2 456.8,797.4 458.9,796.7 461.0,796.2 463.1,795.5 465.2,794.8 467.3,794.2 469.4,793.3 471.5,792.6 473.6,791.9 475.7,791.3 477.8,790.9 479.9,790.6 482.0,790.4 484.1,790.2 486.2,789.9 488.2,789.6 490.3,789.0 492.4,789.0 494.5,789.2 496.6,789.2 498.7,789.4 500.8,789.4 502.9,789.7 505.0,789.7 507.1,789.6 509.2,789.6 511.3,789.2 513.4,789.0 515.5,788.9 517.6,788.9 519.7,788.7 521.8,788.5 523.8,788.2 525.9,788.2 528.0,788.4 530.1,788.4 532.2,788.4 534.3,788.5 536.4,788.7 538.5,788.9 540.6,788.7 542.7,788.4 544.8,788.5 546.9,788.5 549.0,788.9 551.1,788.9 553.2,788.9 555.2,788.9 557.3,788.9 559.4,788.9 561.5,788.9 563.6,788.5 565.7,788.4 567.8,788.0 569.9,787.7 572.0,787.5 574.1,787.2 576.2,787.0 578.3,786.8 580.4,786.5 582.5,786.3 584.6,785.8 586.7,785.1 588.8,784.8 590.8,784.3 592.9,783.6 595.0,783.1 597.1,782.7 599.2,782.2 601.3,781.7 603.4,781.0 605.5,780.5 607.6,779.7 609.7,778.5 611.8,777.6 613.9,776.6 616.0,775.6 618.1,774.4 620.2,772.9 622.2,771.5 624.3,770.0 626.4,768.4 628.5,766.9 630.6,765.5 632.7,764.2 634.8,763.5 636.9,762.8 639.0,762.0 641.1,761.1 643.2,760.1 645.3,759.1 647.4,758.0 649.5,757.5 651.6,757.0 653.7,756.5 655.8,756.2 657.8,756.0 659.9,755.8 662.0,755.7 664.1,755.5 666.2,755.7 668.3,756.2 670.4,756.3 672.5,756.9 674.6,757.2 676.7,757.9 678.8,758.6 680.9,759.1 683.0,759.6 685.1,760.1 687.2,760.9 689.2,762.1 691.3,763.5 693.4,764.9 695.5,766.2 697.6,767.6 699.7,768.9 701.8,770.3 703.9,771.8 706.0,773.4 708.1,774.6 710.2,776.1 712.3,777.5 714.4,778.7 716.5,780.0 718.6,781.4 720.7,782.7 722.8,783.6 724.8,784.8 726.9,786.0 729.0,787.2 731.1,788.4 733.2,789.6 735.3,790.6 737.4,791.4 739.5,792.5 741.6,793.1 743.7,793.6 745.8,794.2 747.9,794.5 750.0,795.0 752.1,795.3 754.2,795.5 756.2,795.7 758.3,795.9 760.4,795.7 762.5,795.5 764.6,795.3 766.7,795.2 768.8,795.2 770.9,795.0 773.0,795.0 775.1,794.5 777.2,794.2 779.3,793.6 781.4,793.1 783.5,792.5 785.6,791.8 787.7,791.1 789.8,790.4 791.8,789.7 793.9,789.2 796.0,788.9 798.1,788.4 800.2,787.7 802.3,787.3 804.4,786.8 806.5,786.7 808.6,786.5 810.7,786.1 812.8,785.5 814.9,785.1 817.0,784.6 819.1,784.3 821.2,783.9 823.2,783.6 825.3,783.3 827.4,782.9 829.5,782.1 831.6,781.2 833.7,781.0 835.8,780.9 837.9,780.9 840.0,780.7 842.1,780.5 844.2,780.4 846.3,780.0 848.4,780.0 850.5,779.5 852.6,779.2 854.7,779.0 856.8,778.7 858.8,778.3 860.9,778.5 863.0,778.5 865.1,778.5 867.2,779.2 869.3,779.8 871.4,780.7 873.5,781.5 875.6,782.2 877.7,783.1 879.8,783.9 881.9,785.0 884.0,786.1 886.1,787.0 888.2,787.9 890.2,788.9 892.3,789.7 894.4,790.4 896.5,791.4 898.6,792.1 900.7,793.1 902.8,793.8 904.9,794.7 907.0,795.7 909.1,796.9 911.2,797.9 913.3,798.9 915.4,800.1 917.5,801.1 919.6,801.8 921.7,802.3 923.8,802.8 925.8,803.7 927.9,803.9 930.0,804.2 932.1,804.4 934.2,804.5 936.3,804.9 938.4,805.1 940.5,805.1 942.6,804.9 944.7,804.7 946.8,804.5 948.9,804.7 951.0,804.9 953.1,805.1 955.2,805.6 957.2,806.1 959.3,806.2 961.4,806.2 963.5,806.2 965.6,806.8 967.7,807.3 969.8,807.8 971.9,808.5 974.0,809.3 976.1,810.3 978.2,811.4 980.3,812.2 982.4,813.1 984.5,814.1 986.6,814.9 988.7,816.1 990.8,817.3 992.8,818.2 994.9,819.2 997.0,820.2 999.1,821.2 1001.2,822.4 1003.3,823.6 1005.4,824.8 1007.5,826.0 1009.6,827.0 1011.7,828.1 1013.8,829.1 1015.9,829.9 1018.0,830.8 1020.1,831.8 1022.2,832.5 1024.2,833.3 1026.3,834.2 1028.4,835.2 1030.5,836.2 1032.6,837.1 1034.7,837.8 1036.8,838.6 1038.9,839.6 1041.0,840.5 1043.1,841.3 1045.2,842.2 1047.3,843.6 1049.4,844.7 1051.5,845.8 1053.6,847.1 1055.7,848.5 1057.8,850.0 1059.8,851.4 1061.9,852.9 1064.0,854.5 1066.1,855.8 1068.2,852.7 1070.3,848.7 1072.4,844.6 1074.5,840.1 1076.6,835.7 1078.7,831.5 1080.8,827.2 1082.9,822.9 1085.0,818.3 1087.1,813.7 1089.2,809.8 1091.2,805.6 1093.3,801.1 1095.4,796.9 1097.5,792.6 1099.6,787.9 1101.7,782.6 1103.8,777.3 1105.9,772.0 1108.0,766.7 1110.1,761.6 1112.2,756.5 1114.3,751.1 1116.4,746.0 1118.5,740.8 1120.6,735.2 1122.7,729.6 1124.8,724.0 1126.8,718.5 1128.9,712.9 1131.0,707.3 1133.1,701.7 1135.2,695.9 1137.3,690.3 1139.4,684.6 1141.5,679.0 1143.6,673.7 1145.7,668.3 1147.8,662.7 1149.9,657.0 1152.0,651.1 1154.1,645.1 1156.2,639.0 1158.2,633.0 1160.3,626.9 1162.4,620.6 1164.5,614.1 1166.6,607.5 1168.7,600.8 1170.8,594.4 1172.9,587.5 1175.0,580.9 1177.1,574.3 1179.2,567.8 1181.3,561.1 1183.4,554.5 1185.5,548.0 1187.6,541.4 1189.7,534.4 1191.8,527.4 1193.8,525.0 1195.9,523.5 1198.0,522.0 1200.1,520.4 1202.2,518.9 1204.3,516.9 1206.4,514.8 1208.5,512.8 1210.6,511.1 1212.7,509.7 1214.8,507.7 1216.9,506.0 1219.0,504.4 1221.1,502.7 1223.2,500.8 1225.2,499.5 1227.3,498.5 1229.4,497.4 1231.5,496.6 1233.6,495.6 1235.7,494.2 1237.8,492.8 1239.9,491.6 1242.0,490.3 1244.1,488.9 1246.2,487.7 1248.3,486.5 1250.4,485.7 1252.5,484.7 1254.6,483.6 1256.7,482.6 1258.8,481.6 1260.8,480.7 1262.9,479.7 1265.0,478.7 1267.1,477.5 1269.2,476.3 1271.3,475.5 1273.4,475.0 1275.5,474.3 1277.6,473.8 1279.7,473.4 1281.8,473.1 1283.9,472.7 1286.0,472.1 1288.1,471.7 1290.2,471.5 1292.2,471.5 1294.3,471.5 1296.4,471.4 1298.5,471.2 1300.6,471.0 1302.7,470.9 1304.8,470.9 1306.9,471.2 1309.0,471.4 1311.1,471.5 1313.2,471.7 1315.3,472.9 1317.4,474.1 1319.5,474.8 1321.6,475.5 1323.7,476.0 1325.8,476.5 1327.8,476.8 1329.9,477.5 1332.0,477.8 1334.1,478.0 1336.2,478.2 1338.3,478.0 1340.4,477.8 1342.5,476.8 1344.6,475.6 1346.7,474.4 1348.8,473.4 1350.9,472.2 1353.0,471.0 1355.1,470.0 1357.2,468.8 1359.2,467.8 1361.3,466.9 1363.4,466.1 1365.5,465.4 1367.6,464.6 1369.7,463.5 1371.8,462.9 1373.9,462.0 1376.0,460.8 1378.1,459.8 1380.2,458.8 1382.3,457.2 1384.4,455.7 1386.5,454.3 1388.6,453.1 1390.7,451.8 1392.8,450.6 1394.8,449.4 1396.9,447.7 1399.0,446.5 1401.1,445.5 1403.2,444.6 1405.3,443.6 1407.4,442.8 1409.5,441.7 1411.6,441.2 1413.7,440.5 1415.8,439.7 1417.9,439.2 1420.0,438.7 1422.1,438.2 1424.2,437.8 1426.2,437.3 1428.3,436.8 1430.4,435.9 1432.5,434.9 1434.6,433.9 1436.7,432.7 1438.8,431.5 1440.9,429.8 1443.0,427.9 1445.1,426.7 1447.2,425.4 1449.3,424.4 1451.4,423.3 1453.5,422.7 1455.6,422.0 1457.7,421.6 1459.8,421.5 1461.8,421.3 1463.9,421.1 1466.0,421.0 1468.1,421.1 1470.2,421.5 1472.3,421.8 1474.4,422.1 1476.5,422.5 1478.6,423.3 1480.7,423.9 1482.8,424.5 1484.9,425.2 1487.0,425.7 1489.1,426.1 1491.2,426.1 1493.2,426.1 1495.3,426.1 1497.4,425.9 1499.5,425.7 1501.6,425.7 1503.7,425.4 1505.8,425.2 1507.9,426.2 1510.0,427.3 1512.1,428.1 1514.2,429.3 1516.3,430.7 1518.4,432.4 1520.5,433.9 1522.6,435.3 1524.7,436.1 1526.8,437.0 1528.8,437.3 1530.9,438.0 1533.0,438.5 1535.1,439.2 1537.2,440.2 1539.3,441.2 1541.4,442.6 1543.5,443.6 1545.6,444.6 1547.7,445.5 1549.8,445.8 1551.9,446.3 1554.0,446.8 1556.1,447.4 1558.2,447.9 1560.2,448.4 1562.3,448.9 1564.4,449.4 1566.5,449.6 1568.6,450.3 1570.7,450.8 1572.8,451.6 1574.9,452.1 1577.0,452.8" fill="none" stroke="#006400" stroke-width="1"/>
<polyline points="-5.9,946.1 -3.8,945.1 -1.7,944.0 0.4,943.0 2.5,942.0 4.6,941.0 6.7,941.0 8.8,941.0 10.9,940.5 13.0,940.0 15.1,938.4 17.2,936.4 19.2,933.8 21.3,931.3 23.4,929.2 25.5,926.7 27.6,924.1 29.7,922.6 31.8,920.5 33.9,919.0 36.0,918.0 38.1,917.5 40.2,917.0 42.3,916.5 44.4,916.5 46.5,916.5 48.6,915.4 50.7,914.4 52.8,913.9 54.8,913.4 56.9,914.4 59.0,915.9 61.1,918.0 63.2,920.0 65.3,922.1 67.4,925.1 69.5,928.2 71.6,930.3 73.7,932.8 75.8,934.9 77.9,936.9 80.0,938.4 82.1,939.4 84.2,941.5 86.2,943.0 88.3,944.0 90.4,945.1 92.5,947.1 94.6,948.1 96.7,949.2 98.8,949.7 100.9,949.7 103.0,949.7 105.1,949.2 107.2,948.1 109.3,945.6 111.4,943.0 113.5,941.5 115.6,939.4 117.7,937.4 119.8,936.9 121.8,936.4 123.9,935.9 126.0,934.3 128.1,932.8 130.2,931.8 132.3,930.8 134.4,928.7 136.5,927.2 138.6,925.1 140.7,923.1 142.8,921.6 144.9,920.5 147.0,919.5 149.1,920.0 151.2,921.6 153.2,923.1 155.3,924.1 157.4,925.1 159.5,926.7 161.6,926.7 163.7,926.2 165.8,926.2 167.9,926.2 170.0,925.7 172.1,925.1 174.2,924.6 176.3,924.1 178.4,924.1 180.5,924.1 182.6,923.1 184.7,922.1 186.8,920.0 188.8,918.0 190.9,914.9 193.0,911.9 195.1,909.3 197.2,906.2 199.3,903.7 201.4,900.1 203.5,896.5 205.6,893.5 207.7,890.4 209.8,886.3 211.9,882.7 214.0,879.2 216.1,875.6 218.2,872.0 220.2,868.4 222.3,865.4 224.4,863.8 226.5,862.3 228.6,860.8 230.7,859.7 232.8,858.2 234.9,856.2 237.0,853.6 239.1,851.0 241.2,848.5 243.3,847.0 245.4,845.4 247.5,843.9 249.6,842.4 251.7,841.8 253.8,841.3 255.8,840.3 257.9,839.3 260.0,837.2 262.1,835.2 264.2,833.2 266.3,830.6 268.4,828.1 270.5,826.0 272.6,824.0 274.7,822.9 276.8,821.9 278.9,821.4 281.0,820.4 283.1,819.9 285.2,818.9 287.2,817.8 289.3,816.8 291.4,815.8 293.5,814.3 295.6,812.7 297.7,811.7 299.8,810.7 301.9,810.7 304.0,810.7 306.1,810.7 308.2,810.7 310.3,811.7 312.4,812.7 314.5,812.7 316.6,812.7 318.7,812.7 320.8,812.2 322.8,812.2 324.9,811.7 327.0,811.2 329.1,810.7 331.2,810.2 333.3,809.7 335.4,809.7 337.5,809.7 339.6,809.7 341.7,810.2 343.8,810.7 345.9,810.7 348.0,811.2 350.1,811.2 352.2,809.7 354.2,808.1 356.3,807.6 358.4,807.1 360.5,807.1 362.6,807.1 364.7,807.6 366.8,807.6 368.9,807.6 371.0,808.1 373.1,808.1 375.2,808.6 377.3,808.6 379.4,808.6 381.5,809.1 383.6,808.6 385.7,809.1 387.8,810.2 389.8,810.7 391.9,811.7 394.0,813.7 396.1,815.8 398.2,817.8 400.3,818.3 402.4,818.3 404.5,818.3 406.6,817.8 408.7,817.3 410.8,816.8 412.9,815.8 415.0,815.8 417.1,815.3 419.2,814.3 421.2,813.2 423.3,811.2 425.4,809.1 427.5,806.1 429.6,803.0 431.7,799.9 433.8,796.9 435.9,793.3 438.0,789.7 440.1,785.6 442.2,783.1 444.3,781.0 446.4,778.5 448.5,776.4 450.6,774.4 452.7,772.4 454.8,770.8 456.8,768.3 458.9,766.2 461.0,765.7 463.1,764.7 465.2,764.2 467.3,764.7 469.4,764.7 471.5,764.7 473.6,765.2 475.7,765.2 477.8,765.7 479.9,766.2 482.0,767.8 484.1,769.3 486.2,770.3 488.2,771.8 490.3,772.9 492.4,775.4 494.5,778.5 496.6,781.0 498.7,784.1 500.8,786.7 502.9,789.2 505.0,791.3 507.1,793.3 509.2,794.8 511.3,796.9 513.4,799.4 515.5,801.5 517.6,804.5 519.7,807.1 521.8,809.7 523.8,811.2 525.9,812.2 528.0,813.7 530.1,814.8 532.2,815.8 534.3,815.8 536.4,815.3 538.5,814.8 540.6,813.7 542.7,812.2 544.8,810.7 546.9,809.7 549.0,809.1 551.1,807.1 553.2,805.1 555.2,802.5 557.3,799.9 559.4,796.9 561.5,793.8 563.6,789.7 565.7,786.1 567.8,782.6 569.9,779.0 572.0,775.9 574.1,772.9 576.2,769.8 578.3,766.7 580.4,763.7 582.5,761.1 584.6,758.6 586.7,755.5 588.8,753.4 590.8,750.4 592.9,748.8 595.0,747.3 597.1,746.3 599.2,745.3 601.3,743.7 603.4,742.2 605.5,742.2 607.6,741.7 609.7,740.7 611.8,740.2 613.9,739.1 616.0,738.1 618.1,737.6 620.2,736.6 622.2,736.1 624.3,735.0 626.4,734.5 628.5,734.5 630.6,733.5 632.7,733.0 634.8,734.5 636.9,736.1 639.0,737.1 641.1,738.1 643.2,739.6 645.3,741.2 647.4,742.2 649.5,744.8 651.6,747.8 653.7,750.4 655.8,753.4 657.8,757.0 659.9,760.1 662.0,763.7 664.1,766.7 666.2,770.8 668.3,775.4 670.4,779.0 672.5,783.6 674.6,788.2 676.7,790.2 678.8,792.3 680.9,793.8 683.0,795.3 685.1,796.9 687.2,799.4 689.2,802.0 691.3,804.0 693.4,806.1 695.5,808.1 697.6,810.2 699.7,811.7 701.8,813.2 703.9,815.3 706.0,817.3 708.1,817.8 710.2,818.3 712.3,818.9 714.4,818.9 716.5,818.9 718.6,819.4 720.7,819.9 722.8,819.9 724.8,820.9 726.9,821.4 729.0,820.9 731.1,820.9 733.2,819.9 735.3,817.8 737.4,815.8 739.5,813.7 741.6,810.7 743.7,807.6 745.8,803.5 747.9,799.4 750.0,796.4 752.1,792.3 754.2,788.7 756.2,784.6 758.3,780.5 760.4,777.5 762.5,774.4 764.6,772.4 766.7,769.3 768.8,767.2 770.9,764.7 773.0,762.1 775.1,759.6 777.2,758.6 779.3,757.0 781.4,755.5 783.5,755.0 785.6,754.5 787.7,754.5 789.8,754.5 791.8,755.0 793.9,757.0 796.0,759.1 798.1,761.6 800.2,763.7 802.3,765.2 804.4,766.2 806.5,767.8 808.6,769.3 810.7,769.8 812.8,770.8 814.9,772.4 817.0,774.4 819.1,776.4 821.2,779.0 823.2,781.5 825.3,784.1 827.4,786.7 829.5,788.2 831.6,789.7 833.7,791.8 835.8,793.3 837.9,794.8 840.0,795.9 842.1,797.4 844.2,798.4 846.3,799.4 848.4,799.9 850.5,799.9 852.6,800.5 854.7,801.5 856.8,801.5 858.8,801.0 860.9,800.5 863.0,799.4 865.1,798.4 867.2,798.4 869.3,798.4 871.4,799.4 873.5,800.5 875.6,799.9 877.7,798.9 879.8,797.9 881.9,797.4 884.0,797.4 886.1,797.4 888.2,797.9 890.2,798.9 892.3,799.9 894.4,801.0 896.5,802.0 898.6,802.5 900.7,804.0 902.8,804.5 904.9,805.6 907.0,807.1 909.1,808.1 911.2,808.6 913.3,809.1 915.4,810.2 917.5,811.7 919.6,813.2 921.7,814.3 923.8,815.3 925.8,816.3 927.9,815.8 930.0,815.3 932.1,814.3 934.2,813.7 936.3,813.2 938.4,811.7 940.5,811.2 942.6,809.7 944.7,809.1 946.8,808.6 948.9,808.6 951.0,808.1 953.1,808.1 955.2,808.1 957.2,807.6 959.3,807.1 961.4,806.6 963.5,806.6 965.6,807.6 967.7,808.1 969.8,810.2 971.9,812.2 974.0,814.8 976.1,817.3 978.2,819.9 980.3,822.9 982.4,825.5 984.5,828.6 986.6,831.1 988.7,834.2 990.8,836.2 992.8,838.3 994.9,840.8 997.0,843.4 999.1,845.9 1001.2,848.5 1003.3,851.0 1005.4,853.6 1007.5,855.1 1009.6,856.7 1011.7,858.2 1013.8,859.7 1015.9,860.8 1018.0,861.3 1020.1,862.3 1022.2,862.8 1024.2,863.3 1026.3,864.3 1028.4,865.4 1030.5,865.9 1032.6,866.4 1034.7,866.9 1036.8,866.9 1038.9,867.4 1041.0,867.9 1043.1,868.4 1045.2,868.9 1047.3,870.5 1049.4,871.5 1051.5,872.5 1053.6,873.0 1055.7,873.5 1057.8,874.6 1059.8,875.6 1061.9,876.6 1064.0,877.6 1066.1,878.6 1068.2,865.4 1070.3,849.5 1072.4,833.7 1074.5,817.8 1076.6,802.0 1078.7,786.7 1080.8,770.8 1082.9,755.0 1085.0,738.1 1087.1,721.3 1089.2,705.4 1091.2,690.1 1093.3,674.2 1095.4,659.4 1097.5,644.6 1099.6,628.2 1101.7,610.9 1103.8,593.0 1105.9,575.6 1108.0,558.2 1110.1,555.2 1112.2,554.7 1114.3,553.6 1116.4,553.6 1118.5,553.6 1120.6,552.1 1122.7,550.6 1124.8,549.0 1126.8,549.0 1128.9,548.5 1131.0,546.0 1133.1,543.4 1135.2,540.9 1137.3,538.3 1139.4,535.8 1141.5,534.2 1143.6,534.7 1145.7,535.2 1147.8,534.7 1149.9,534.2 1152.0,532.7 1154.1,531.2 1156.2,529.6 1158.2,527.6 1160.3,525.0 1162.4,523.0 1164.5,520.9 1166.6,518.4 1168.7,515.3 1170.8,513.3 1172.9,511.2 1175.0,509.2 1177.1,507.7 1179.2,505.6 1181.3,503.1 1183.4,501.0 1185.5,498.5 1187.6,495.9 1189.7,492.8 1191.8,489.8 1193.8,487.2 1195.9,484.7 1198.0,482.6 1200.1,480.1 1202.2,478.0 1204.3,475.5 1206.4,472.9 1208.5,470.9 1210.6,468.8 1212.7,467.3 1214.8,465.8 1216.9,465.2 1219.0,464.7 1221.1,464.2 1223.2,463.7 1225.2,463.2 1227.3,462.2 1229.4,461.2 1231.5,462.2 1233.6,462.7 1235.7,462.7 1237.8,462.7 1239.9,462.7 1242.0,463.2 1244.1,463.7 1246.2,464.7 1248.3,465.8 1250.4,467.8 1252.5,469.8 1254.6,470.4 1256.7,470.9 1258.8,470.4 1260.8,469.8 1262.9,469.3 1265.0,469.3 1267.1,468.3 1269.2,468.3 1271.3,469.3 1273.4,469.8 1275.5,470.4 1277.6,471.4 1279.7,472.9 1281.8,473.9 1283.9,475.0 1286.0,474.4 1288.1,475.0 1290.2,476.0 1292.2,476.0 1294.3,476.0 1296.4,476.5 1298.5,477.0 1300.6,477.5 1302.7,478.0 1304.8,479.0 1306.9,480.6 1309.0,482.6 1311.1,484.1 1313.2,484.7 1315.3,486.7 1317.4,489.3 1319.5,490.3 1321.6,490.8 1323.7,491.3 1325.8,491.3 1327.8,492.3 1329.9,492.8 1332.0,491.8 1334.1,490.3 1336.2,488.7 1338.3,487.2 1340.4,485.7 1342.5,482.6 1344.6,479.0 1346.7,475.0 1348.8,470.4 1350.9,465.8 1353.0,460.6 1355.1,456.0 1357.2,449.9 1359.2,443.8 1361.3,439.2 1363.4,434.6 1365.5,431.0 1367.6,427.4 1369.7,423.9 1371.8,420.8 1373.9,418.2 1376.0,416.2 1378.1,414.7 1380.2,412.6 1382.3,409.0 1384.4,407.0 1386.5,406.0 1388.6,405.5 1390.7,404.4 1392.8,403.4 1394.8,403.4 1396.9,402.4 1399.0,402.9 1401.1,403.4 1403.2,404.4 1405.3,405.5 1407.4,406.0 1409.5,406.5 1411.6,407.5 1413.7,408.0 1415.8,409.0 1417.9,411.1 1420.0,412.6 1422.1,414.7 1424.2,418.7 1426.2,422.3 1428.3,425.4 1430.4,427.4 1432.5,430.0 1434.6,432.5 1436.7,434.1 1438.8,436.1 1440.9,436.6 1443.0,436.6 1445.1,436.6 1447.2,436.1 1449.3,436.1 1451.4,436.1 1453.5,436.6 1455.6,437.1 1457.7,437.6 1459.8,437.1 1461.8,436.6 1463.9,436.1 1466.0,435.1 1468.1,434.1 1470.2,433.0 1472.3,432.5 1474.4,432.0 1476.5,431.5 1478.6,432.5 1480.7,433.0 1482.8,434.1 1484.9,435.6 1487.0,436.1 1489.1,436.6 1491.2,436.1 1493.2,435.6 1495.3,434.1 1497.4,432.5 1499.5,430.5 1501.6,429.0 1503.7,426.9 1505.8,424.9 1507.9,424.9 1510.0,425.4 1512.1,425.9 1514.2,427.9 1516.3,430.0 1518.4,433.0 1520.5,435.1 1522.6,436.6 1524.7,437.6 1526.8,438.7 1528.8,439.2 1530.9,441.2 1533.0,443.3 1535.1,445.8 1537.2,449.9 1539.3,454.0 1541.4,459.6 1543.5,464.7 1545.6,470.4 1547.7,475.5 1549.8,477.5 1551.9,479.5 1554.0,481.6 1556.1,481.6 1558.2,481.6 1560.2,480.6 1562.3,479.0 1564.4,478.5 1566.5,477.0 1568.6,476.5 1570.7,477.0 1572.8,477.0 1574.9,477.0 1577.0,477.0" fill="none" stroke="#000090" stroke-width="1"/>
<polyline points="-5.9,937.9 -3.8,935.9 -1.7,933.8 0.4,931.8 2.5,929.7 4.6,929.7 6.7,933.8 8.8,937.9 10.9,940.0 13.0,942.0 15.1,940.0 17.2,931.8 19.2,921.6 21.3,913.4 23.4,905.2 25.5,899.1 27.6,895.0 29.7,897.0 31.8,897.0 33.9,899.1 36.0,903.2 38.1,909.3 40.2,911.3 42.3,915.4 44.4,919.5 46.5,923.6 48.6,925.7 50.7,927.7 52.8,929.7 54.8,929.7 56.9,931.8 59.0,933.8 61.1,935.9 63.2,937.9 65.3,940.0 67.4,942.0 69.5,944.0 71.6,946.1 73.7,948.1 75.8,950.2 77.9,950.2 80.0,950.2 82.1,948.1 84.2,950.2 86.2,952.2 88.3,952.2 90.4,952.2 92.5,958.4 94.6,956.3 96.7,954.3 98.8,954.3 100.9,952.2 103.0,946.1 105.1,942.0 107.2,935.9 109.3,925.7 111.4,917.5 113.5,913.4 115.6,909.3 117.7,907.3 119.8,915.4 121.8,923.6 123.9,925.7 126.0,929.7 128.1,933.8 130.2,931.8 132.3,929.7 134.4,929.7 136.5,927.7 138.6,923.6 140.7,919.5 142.8,915.4 144.9,913.4 147.0,911.3 149.1,915.4 151.2,919.5 153.2,923.6 155.3,927.7 157.4,931.8 159.5,933.8 161.6,935.9 163.7,935.9 165.8,933.8 167.9,933.8 170.0,929.7 172.1,925.7 174.2,923.6 176.3,921.6 178.4,919.5 180.5,917.5 182.6,911.3 184.7,905.2 186.8,897.0 188.8,886.8 190.9,878.6 193.0,874.6 195.1,872.5 197.2,872.5 199.3,874.6 201.4,874.6 203.5,874.6 205.6,872.5 207.7,870.5 209.8,864.3 211.9,860.2 214.0,856.2 216.1,852.1 218.2,848.0 220.2,848.0 222.3,848.0 224.4,850.0 226.5,852.1 228.6,852.1 230.7,852.1 232.8,850.0 234.9,843.9 237.0,837.8 239.1,833.7 241.2,829.6 243.3,829.6 245.4,831.6 247.5,833.7 249.6,835.7 251.7,837.8 253.8,837.8 255.8,835.7 257.9,833.7 260.0,827.5 262.1,821.4 264.2,815.3 266.3,811.2 268.4,807.1 270.5,807.1 272.6,807.1 274.7,809.1 276.8,809.1 278.9,811.2 281.0,811.2 283.1,813.2 285.2,813.2 287.2,815.3 289.3,815.3 291.4,817.3 293.5,815.3 295.6,813.2 297.7,811.2 299.8,809.1 301.9,807.1 304.0,807.1 306.1,807.1 308.2,807.1 310.3,811.2 312.4,815.3 314.5,815.3 316.6,817.3 318.7,817.3 320.8,813.2 322.8,809.1 324.9,809.1 327.0,807.1 329.1,807.1 331.2,807.1 333.3,807.1 335.4,807.1 337.5,807.1 339.6,807.1 341.7,809.1 343.8,811.2 345.9,811.2 348.0,813.2 350.1,813.2 352.2,809.1 354.2,805.1 356.3,803.0 358.4,801.0 360.5,801.0 362.6,803.0 364.7,807.1 366.8,809.1 368.9,809.1 371.0,811.2 373.1,811.2 375.2,811.2 377.3,811.2 379.4,811.2 381.5,811.2 383.6,811.2 385.7,813.2 387.8,817.3 389.8,821.4 391.9,823.5 394.0,829.6 396.1,831.6 398.2,833.7 400.3,831.6 402.4,827.5 404.5,821.4 406.6,815.3 408.7,807.1 410.8,803.0 412.9,801.0 415.0,801.0 417.1,801.0 419.2,798.9 421.2,796.9 423.3,792.8 425.4,784.6 427.5,776.4 429.6,772.4 431.7,768.3 433.8,766.2 435.9,766.2 438.0,766.2 440.1,764.2 442.2,764.2 444.3,764.2 446.4,762.1 448.5,762.1 450.6,762.1 452.7,760.1 454.8,760.1 456.8,760.1 458.9,760.1 461.0,764.2 463.1,766.2 465.2,766.2 467.3,770.3 469.4,770.3 471.5,768.3 473.6,770.3 475.7,770.3 477.8,770.3 479.9,772.4 482.0,776.4 484.1,780.5 486.2,784.6 488.2,786.7 490.3,788.7 492.4,792.8 494.5,796.9 496.6,803.0 498.7,809.1 500.8,815.3 502.9,819.4 505.0,817.3 507.1,815.3 509.2,813.2 511.3,811.2 513.4,809.1 515.5,811.2 517.6,815.3 519.7,819.4 521.8,823.5 523.8,823.5 525.9,823.5 528.0,821.4 530.1,817.3 532.2,813.2 534.3,811.2 536.4,809.1 538.5,807.1 540.6,805.1 542.7,801.0 544.8,798.9 546.9,794.8 549.0,792.8 551.1,786.7 553.2,782.6 555.2,776.4 557.3,772.4 559.4,766.2 561.5,766.2 563.6,762.1 565.7,758.0 567.8,754.0 569.9,749.9 572.0,745.8 574.1,745.8 576.2,745.8 578.3,745.8 580.4,745.8 582.5,745.8 584.6,743.7 586.7,741.7 588.8,741.7 590.8,739.6 592.9,737.6 595.0,737.6 597.1,739.6 599.2,739.6 601.3,739.6 603.4,739.6 605.5,741.7 607.6,739.6 609.7,735.6 611.8,735.6 613.9,733.5 616.0,729.4 618.1,729.4 620.2,729.4 622.2,729.4 624.3,729.4 626.4,729.4 628.5,729.4 630.6,729.4 632.7,727.4 634.8,735.6 636.9,743.7 639.0,749.9 641.1,758.0 643.2,766.2 645.3,766.2 647.4,766.2 649.5,770.3 651.6,774.4 653.7,778.5 655.8,782.6 657.8,788.7 659.9,790.7 662.0,792.8 664.1,794.8 666.2,798.9 668.3,803.0 670.4,805.1 672.5,809.1 674.6,813.2 676.7,813.2 678.8,811.2 680.9,809.1 683.0,805.1 685.1,801.0 687.2,803.0 689.2,805.1 691.3,811.2 693.4,817.3 695.5,823.5 697.6,825.5 699.7,827.5 701.8,827.5 703.9,829.6 706.0,831.6 708.1,829.6 710.2,829.6 712.3,827.5 714.4,823.5 716.5,819.4 718.6,819.4 720.7,817.3 722.8,813.2 724.8,813.2 726.9,811.2 729.0,809.1 731.1,809.1 733.2,811.2 735.3,805.1 737.4,801.0 739.5,796.9 741.6,786.7 743.7,778.5 745.8,772.4 747.9,766.2 750.0,760.1 752.1,756.0 754.2,751.9 756.2,747.8 758.3,743.7 760.4,743.7 762.5,745.8 764.6,747.8 766.7,751.9 768.8,758.0 770.9,758.0 773.0,760.1 775.1,760.1 777.2,762.1 779.3,760.1 781.4,760.1 783.5,758.0 785.6,758.0 787.7,756.0 789.8,756.0 791.8,758.0 793.9,764.2 796.0,770.3 798.1,776.4 800.2,780.5 802.3,784.6 804.4,782.6 806.5,782.6 808.6,782.6 810.7,782.6 812.8,780.5 814.9,784.6 817.0,786.7 819.1,790.7 821.2,796.9 823.2,803.0 825.3,805.1 827.4,807.1 829.5,803.0 831.6,798.9 833.7,798.9 835.8,801.0 837.9,803.0 840.0,807.1 842.1,811.2 844.2,811.2 846.3,807.1 848.4,803.0 850.5,798.9 852.6,794.8 854.7,792.8 856.8,792.8 858.8,790.7 860.9,792.8 863.0,792.8 865.1,790.7 867.2,792.8 869.3,796.9 871.4,798.9 873.5,803.0 875.6,805.1 877.7,803.0 879.8,801.0 881.9,798.9 884.0,798.9 886.1,801.0 888.2,803.0 890.2,807.1 892.3,809.1 894.4,809.1 896.5,811.2 898.6,811.2 900.7,811.2 902.8,811.2 904.9,811.2 907.0,811.2 909.1,815.3 911.2,815.3 913.3,817.3 915.4,821.4 917.5,823.5 919.6,823.5 921.7,823.5 923.8,823.5 925.8,823.5 927.9,817.3 930.0,811.2 932.1,807.1 934.2,803.0 936.3,796.9 938.4,794.8 940.5,794.8 942.6,792.8 944.7,792.8 946.8,792.8 948.9,798.9 951.0,803.0 953.1,809.1 955.2,813.2 957.2,817.3 959.3,817.3 961.4,817.3 963.5,817.3 965.6,821.4 967.7,825.5 969.8,829.6 971.9,833.7 974.0,839.8 976.1,841.8 978.2,843.9 980.3,845.9 982.4,848.0 984.5,848.0 986.6,848.0 988.7,850.0 990.8,852.1 992.8,854.1 994.9,858.2 997.0,862.3 999.1,864.3 1001.2,866.4 1003.3,868.4 1005.4,868.4 1007.5,868.4 1009.6,868.4 1011.7,868.4 1013.8,868.4 1015.9,868.4 1018.0,866.4 1020.1,866.4 1022.2,864.3 1024.2,862.3 1026.3,862.3 1028.4,864.3 1030.5,864.3 1032.6,866.4 1034.7,868.4 1036.8,868.4 1038.9,870.5 1041.0,872.5 1043.1,874.6 1045.2,876.6 1047.3,882.7 1049.4,884.8 1051.5,886.8 1053.6,886.8 1055.7,886.8 1057.8,884.8 1059.8,882.7 1061.9,882.7 1064.0,882.7 1066.1,882.7 1068.2,825.5 1070.3,760.1 1072.4,692.6 1074.5,627.2 1076.6,561.8 1078.7,553.6 1080.8,555.7 1082.9,557.7 1085.0,555.7 1087.1,553.6 1089.2,557.7 1091.2,561.8 1093.3,563.9 1095.4,572.0 1097.5,580.2 1099.6,576.1 1101.7,565.9 1103.8,557.7 1105.9,547.5 1108.0,537.3 1110.1,533.2 1112.2,535.2 1114.3,535.2 1116.4,539.3 1118.5,543.4 1120.6,541.4 1122.7,539.3 1124.8,539.3 1126.8,537.3 1128.9,533.2 1131.0,533.2 1133.1,533.2 1135.2,531.2 1137.3,529.1 1139.4,529.1 1141.5,529.1 1143.6,531.2 1145.7,535.2 1147.8,533.2 1149.9,531.2 1152.0,527.1 1154.1,520.9 1156.2,512.8 1158.2,510.7 1160.3,506.6 1162.4,502.5 1164.5,498.5 1166.6,494.4 1168.7,488.2 1170.8,486.2 1172.9,486.2 1175.0,486.2 1177.1,488.2 1179.2,490.3 1181.3,488.2 1183.4,488.2 1185.5,488.2 1187.6,488.2 1189.7,482.1 1191.8,478.0 1193.8,471.9 1195.9,465.8 1198.0,459.6 1200.1,459.6 1202.2,459.6 1204.3,455.5 1206.4,451.4 1208.5,447.4 1210.6,443.3 1212.7,443.3 1214.8,447.4 1216.9,455.5 1219.0,463.7 1221.1,471.9 1223.2,473.9 1225.2,478.0 1227.3,476.0 1229.4,473.9 1231.5,473.9 1233.6,473.9 1235.7,469.8 1237.8,467.8 1239.9,465.8 1242.0,463.7 1244.1,463.7 1246.2,463.7 1248.3,463.7 1250.4,467.8 1252.5,469.8 1254.6,469.8 1256.7,471.9 1258.8,473.9 1260.8,471.9 1262.9,469.8 1265.0,469.8 1267.1,467.8 1269.2,467.8 1271.3,471.9 1273.4,476.0 1275.5,478.0 1277.6,482.1 1279.7,486.2 1281.8,484.1 1283.9,484.1 1286.0,480.1 1288.1,478.0 1290.2,476.0 1292.2,476.0 1294.3,473.9 1296.4,478.0 1298.5,480.1 1300.6,480.1 1302.7,480.1 1304.8,482.1 1306.9,486.2 1309.0,490.3 1311.1,494.4 1313.2,498.5 1315.3,506.6 1317.4,512.8 1319.5,512.8 1321.6,512.8 1323.7,510.7 1325.8,502.5 1327.8,492.3 1329.9,488.2 1332.0,480.1 1334.1,471.9 1336.2,463.7 1338.3,457.6 1340.4,451.4 1342.5,443.3 1344.6,435.1 1346.7,426.9 1348.8,418.7 1350.9,410.6 1353.0,406.5 1355.1,406.5 1357.2,406.5 1359.2,406.5 1361.3,406.5 1363.4,408.5 1365.5,410.6 1367.6,412.6 1369.7,412.6 1371.8,414.7 1373.9,414.7 1376.0,412.6 1378.1,412.6 1380.2,412.6 1382.3,404.4 1384.4,398.3 1386.5,394.2 1388.6,390.1 1390.7,386.0 1392.8,388.1 1394.8,392.2 1396.9,392.2 1399.0,396.3 1401.1,402.4 1403.2,410.6 1405.3,416.7 1407.4,424.9 1409.5,426.9 1411.6,429.0 1413.7,429.0 1415.8,429.0 1417.9,433.0 1420.0,437.1 1422.1,441.2 1424.2,447.4 1426.2,451.4 1428.3,451.4 1430.4,449.4 1432.5,447.4 1434.6,443.3 1436.7,439.2 1438.8,435.1 1440.9,433.0 1443.0,429.0 1445.1,426.9 1447.2,424.9 1449.3,424.9 1451.4,424.9 1453.5,429.0 1455.6,431.0 1457.7,435.1 1459.8,437.1 1461.8,439.2 1463.9,439.2 1466.0,439.2 1468.1,437.1 1470.2,435.1 1472.3,433.0 1474.4,431.0 1476.5,429.0 1478.6,433.0 1480.7,435.1 1482.8,439.2 1484.9,443.3 1487.0,445.3 1489.1,441.2 1491.2,437.1 1493.2,431.0 1495.3,422.8 1497.4,416.7 1499.5,410.6 1501.6,408.5 1503.7,404.4 1505.8,402.4 1507.9,408.5 1510.0,416.7 1512.1,422.8 1514.2,437.1 1516.3,451.4 1518.4,461.7 1520.5,471.9 1522.6,478.0 1524.7,478.0 1526.8,478.0 1528.8,469.8 1530.9,465.8 1533.0,463.7 1535.1,463.7 1537.2,467.8 1539.3,476.0 1541.4,484.1 1543.5,494.4 1545.6,502.5 1547.7,504.6 1549.8,502.5 1551.9,496.4 1554.0,490.3 1556.1,482.1 1558.2,476.0 1560.2,473.9 1562.3,469.8 1564.4,465.8 1566.5,459.6 1568.6,457.6 1570.7,455.5 1572.8,457.6 1574.9,457.6 1577.0,463.7" fill="none" stroke="#d00000" stroke-width="1"/>
</g>
<g font-family="'Liberation Sans','NanumGothic',sans-serif" font-size="11" shape-rendering="auto" text-rendering="geometricPrecision">
<text x="1591.5" y="401.5" fill="#000" textLength="34" lengthAdjust="spacing">306.00</text>
<text x="1591.5" y="503.5" fill="#000" textLength="34" lengthAdjust="spacing">305.50</text>
<text x="1591.5" y="605.5" fill="#000" textLength="34" lengthAdjust="spacing">305.00</text>
<text x="1591.5" y="707.5" fill="#000" textLength="34" lengthAdjust="spacing">304.50</text>
<text x="1591.5" y="810.5" fill="#000" textLength="34" lengthAdjust="spacing">304.00</text>
<text x="1591.5" y="912.5" fill="#000" textLength="34" lengthAdjust="spacing">303.50</text>
<text x="1591.5" y="108.5" fill="#000" textLength="34" lengthAdjust="spacing">-26.00</text>
<text x="62" y="1004" text-anchor="middle">14:24:04</text>
<text x="130" y="1004" text-anchor="middle">14:29:35</text>
<text x="196" y="1004" text-anchor="middle">14:33:57</text>
<text x="262" y="1004" text-anchor="middle">14:36:47</text>
<text x="330" y="1004" text-anchor="middle">14:39:35</text>
<text x="396" y="1004" text-anchor="middle">14:47:23</text>
<text x="464" y="1004" text-anchor="middle">14:53:30</text>
<text x="530" y="1004" text-anchor="middle">14:59:01</text>
<text x="598" y="1004" text-anchor="middle"><tspan font-weight="bold">15:</tspan>03:13</text>
<text x="664" y="1004" text-anchor="middle">15:06:40</text>
<text x="732" y="1004" text-anchor="middle">15:10:00</text>
<text x="798" y="1004" text-anchor="middle">15:14:58</text>
<text x="866" y="1004" text-anchor="middle">15:23:57</text>
<text x="932" y="1004" text-anchor="middle">15:30:11</text>
<text x="1000" y="1004" text-anchor="middle">15:32:12</text>
<text x="1067" y="1004" text-anchor="middle" font-weight="bold">01/20</text>
<text x="1134" y="1004" text-anchor="middle">09:00:31</text>
<text x="1202" y="1004" text-anchor="middle">09:01:02</text>
<text x="1268" y="1004" text-anchor="middle">09:01:36</text>
<text x="1336" y="1004" text-anchor="middle">09:02:41</text>
<text x="1402" y="1004" text-anchor="middle">09:03:12</text>
<text x="1470" y="1004" text-anchor="middle">09:04:09</text>
<text x="1536" y="1004" text-anchor="middle">09:06:06</text>
<text x="1598" y="1004">09:07:01</text>
<text x="1231" y="377" fill="#960f0f" textLength="126" lengthAdjust="spacing">306.10 (01/20 09:03:02)</text>
<text x="112" y="976" fill="#000078" textLength="124" lengthAdjust="spacing">303.20 (01/17 14:26:12)</text>
<text x="1468" y="366" fill="#960f0f" textLength="53" lengthAdjust="spacing">H: -0.15%</text>
<text x="1533" y="366" fill="#000078" textLength="45" lengthAdjust="spacing">L: 0.81%</text>
<text x="-3" y="34" fill="#960f0f" font-size="12" textLength="336" lengthAdjust="spacing">KP200 선물연결&#160;&#160;0 5포인트 buy_수익 2020/01/21 17:00:00 0.00</text>
</g>
<path d="M1370 374.5H1384M1379 371.5l5 3" stroke="#a01818" fill="none" shape-rendering="auto"/>
<path d="M91 974.5H105M96 977.5l-5 -3" stroke="#101080" fill="none" shape-rendering="auto"/>
<g fill="#fff" stroke="#000" stroke-width="1"><rect x="1562.5" y="24.5" width="7" height="7" stroke="#666"/><rect x="1571.5" y="24.5" width="7" height="7" stroke="#666"/><path d="M1564 28.5h4M1573 26l5 5M1578 26l-5 5"/><rect x="1572.5" y="345.5" width="8" height="8" stroke="#888"/><rect x="1574.5" y="347.5" width="4" height="4"/></g>
</svg>
<div class="abs " style="left:0px;top:0px;width:1645px;height:22px;background:#a5c1de;"></div>
<div class="abs " style="left:1642px;top:22px;width:3px;height:1004px;background:#a5c1de;"></div>
<div class="abs " style="left:1641px;top:48px;width:4px;height:26px;background:#d6e2f0;border:1px solid #90a8c4;"></div>
<div class="abs " style="left:0px;top:1px;width:2px;height:19px;border-left:1px solid #7f93aa;border-right:1px solid #e8f0f8;"></div>
<div class="abs " style="left:5px;top:1px;width:2px;height:19px;border-left:1px solid #7f93aa;border-right:1px solid #e8f0f8;"></div>
<div class="abs " style="left:136px;top:1px;width:2px;height:19px;border-left:1px solid #7f93aa;border-right:1px solid #e8f0f8;"></div>
<div class="abs " style="left:353px;top:1px;width:2px;height:19px;border-left:1px solid #7f93aa;border-right:1px solid #e8f0f8;"></div>
<div class="abs " style="left:595px;top:1px;width:2px;height:19px;border-left:1px solid #7f93aa;border-right:1px solid #e8f0f8;"></div>
<div class="abs " style="left:688px;top:1px;width:2px;height:19px;border-left:1px solid #7f93aa;border-right:1px solid #e8f0f8;"></div>
<div class="abs " style="left:782px;top:1px;width:2px;height:19px;border-left:1px solid #7f93aa;border-right:1px solid #e8f0f8;"></div>
<div class="abs " style="left:11px;top:1px;width:78px;height:19px;background:#fff;border:1px solid #c3d1e2;border-top-color:#8da2bc;border-left-color:#a9bbd0;line-height:17px;padding-left:3px;white-space:nowrap;letter-spacing:-.6px;">00000000<svg class="abs" style="right:5px;top:7px" width="7" height="4" viewBox="0 0 7 4"><path d="M0 0h7l-3.5 4z" fill="#000"/></svg></div>
<div class="abs " style="left:92px;top:1px;width:18px;height:19px;background:linear-gradient(#ffffff,#f2f2f2 45%,#d9d9d9 55%,#ececec);border:1px solid #cdd8e5;border-radius:3px;text-align:center;line-height:17px;"><svg width="18" height="19" viewBox="0 0 18 19" style="position:absolute;left:-1px;top:-1px"><circle cx="7.3" cy="7.3" r="4" fill="#eef6ff" stroke="#666" stroke-width="1.5"/><path d="M10.3 10.5l4.700 4.700" stroke="#444" stroke-width="2.300" stroke-linecap="round"/></svg></div>
<div class="abs " style="left:114px;top:1px;width:18px;height:19px;background:linear-gradient(#ffffff,#f2f2f2 45%,#d9d9d9 55%,#ececec);border:1px solid #cdd8e5;border-radius:3px;text-align:center;line-height:17px;"><svg width="18" height="19" viewBox="0 0 18 19" style="position:absolute;left:-1px;top:-1px"><circle cx="7.3" cy="7.3" r="4" fill="#eef6ff" stroke="#666" stroke-width="1.5"/><path d="M10.3 10.5l4.700 4.700" stroke="#444" stroke-width="2.300" stroke-linecap="round"/><path d="M8 10.500l5-3-.5 2.300 4-.8.300 1.500-4 .8 1.500 1.800z" fill="#e00000"/></svg></div>
<div class="abs " style="left:142px;top:1px;width:18px;height:19px;background:linear-gradient(#ffffff,#f2f2f2 45%,#d9d9d9 55%,#ececec);border:1px solid #cdd8e5;border-radius:3px;text-align:center;line-height:17px;">일</div>
<div class="abs " style="left:164px;top:1px;width:18px;height:19px;background:linear-gradient(#ffffff,#f2f2f2 45%,#d9d9d9 55%,#ececec);border:1px solid #cdd8e5;border-radius:3px;text-align:center;line-height:17px;">주</div>
<div class="abs " style="left:186px;top:1px;width:18px;height:19px;background:linear-gradient(#ffffff,#f2f2f2 45%,#d9d9d9 55%,#ececec);border:1px solid #cdd8e5;border-radius:3px;text-align:center;line-height:17px;">월</div>
<div class="abs " style="left:208px;top:1px;width:18px;height:19px;background:linear-gradient(#ffffff,#f2f2f2 45%,#d9d9d9 55%,#ececec);border:1px solid #cdd8e5;border-radius:3px;text-align:center;line-height:17px;">분</div>
<div class="abs " style="left:229px;top:1px;width:43px;height:19px;background:#fff;border:1px solid #c3d1e2;border-top-color:#8da2bc;border-left-color:#a9bbd0;line-height:17px;padding-left:4px;white-space:nowrap;letter-spacing:-.6px;">1<svg class="abs" style="right:6px;top:7px" width="7" height="4" viewBox="0 0 7 4"><path d="M0 0h7l-3.5 4z" fill="#000"/></svg></div>
<div class="abs " style="left:276px;top:1px;width:18px;height:19px;background:linear-gradient(#ffd8d8,#ffb4b4 45%,#f79a9a 55%,#ffc4c4);border:1px solid #cdd8e5;border-radius:3px;text-align:center;line-height:17px;border-color:#e4b4b4;">틱</div>
<div class="abs " style="left:297px;top:1px;width:53px;height:19px;background:#fff;border:1px solid #c3d1e2;border-top-color:#8da2bc;border-left-color:#a9bbd0;line-height:17px;padding-left:4px;white-space:nowrap;letter-spacing:-.6px;">10<svg class="abs" style="right:6px;top:7px" width="7" height="4" viewBox="0 0 7 4"><path d="M0 0h7l-3.5 4z" fill="#000"/></svg></div>
<div class="abs " style="left:359px;top:1px;width:49px;height:19px;background:#fff;border:1px solid #c3d1e2;border-top-color:#8da2bc;border-left-color:#a9bbd0;line-height:17px;padding-left:3px;white-space:nowrap;letter-spacing:-.6px;">날짜<svg class="abs" style="right:5px;top:7px" width="7" height="4" viewBox="0 0 7 4"><path d="M0 0h7l-3.5 4z" fill="#000"/></svg></div>
<div class="abs " style="left:410px;top:1px;width:84px;height:19px;background:#fff;border:1px solid #c3d1e2;border-top-color:#8da2bc;border-left-color:#a9bbd0;line-height:17px;padding-left:3px;white-space:nowrap;letter-spacing:-.6px;">2018-08-01<svg class="abs" style="right:6px;top:7px" width="7" height="4" viewBox="0 0 7 4"><path d="M0 0h7l-3.5 4z" fill="#000"/></svg></div>
<div class="abs " style="left:497px;top:3px;width:8px;height:16px;line-height:16px;">~</div>
<div class="abs " style="left:507px;top:1px;width:85px;height:19px;background:#fff;border:1px solid #c3d1e2;border-top-color:#8da2bc;border-left-color:#a9bbd0;line-height:17px;padding-left:3px;white-space:nowrap;letter-spacing:-.6px;">2020-01-21<svg class="abs" style="right:6px;top:7px" width="7" height="4" viewBox="0 0 7 4"><path d="M0 0h7l-3.5 4z" fill="#000"/></svg></div>
<div class="abs " style="left:601px;top:1px;width:18px;height:19px;background:linear-gradient(#ffffff,#f2f2f2 45%,#d9d9d9 55%,#ececec);border:1px solid #cdd8e5;border-radius:3px;text-align:center;line-height:17px;"><svg width="18" height="19" viewBox="0 0 18 19" style="position:absolute;left:-1px;top:-1px"><path d="M2 7.500h3.500l1.500 1.500h4l1 1h4" stroke="#444" stroke-width="1.500" fill="none"/><path d="M2 11.500h2l2 2h2l7.500-9" stroke="#e00000" stroke-width="1.600" fill="none"/></svg></div>
<div class="abs " style="left:623px;top:1px;width:18px;height:19px;background:linear-gradient(#ffffff,#f2f2f2 45%,#d9d9d9 55%,#ececec);border:1px solid #cdd8e5;border-radius:3px;text-align:center;line-height:17px;"><svg width="18" height="19" viewBox="0 0 18 19" style="position:absolute;left:-1px;top:-1px"><path d="M3.500 9v6.500M6.500 4v9M10 3.300v8.700M13 2.200v7" stroke="#444" stroke-width="1.800"/><path d="M2.700 5h1.800v1.800h-1.800zM5.700 1.600h1.800v1.800h-1.800zM9 13.700h1.800v1.800h-1.800zM12 11.500h1.800v1.800h-1.800z" fill="#e00000"/></svg></div>
<div class="abs " style="left:645px;top:1px;width:18px;height:19px;background:linear-gradient(#ffffff,#f2f2f2 45%,#d9d9d9 55%,#ececec);border:1px solid #cdd8e5;border-radius:3px;text-align:center;line-height:17px;"><svg width="18" height="19" viewBox="0 0 18 19" style="position:absolute;left:-1px;top:-1px"><path d="M3.600 8v7.300M6.900 6.200v8M10 4.400v8M13.100 2.200v8.400" stroke="#4a4a4a" stroke-width="1.900"/></svg></div>
<div class="abs " style="left:667px;top:1px;width:18px;height:19px;background:linear-gradient(#ffffff,#f2f2f2 45%,#d9d9d9 55%,#ececec);border:1px solid #cdd8e5;border-radius:3px;text-align:center;line-height:17px;"><svg width="18" height="19" viewBox="0 0 18 19" style="position:absolute;left:-1px;top:-1px"><path d="M5.500 2.900l3.300 4.100h-2v5.400h-2.600v-5.400h-2z" fill="#444"/><path d="M11.200 5.500h2.400v5.800h2l-3.200 3.300-3.200-3.300h2z" fill="#fff" stroke="#666" stroke-width=".9"/></svg></div>
<div class="abs " style="left:695px;top:1px;width:18px;height:19px;background:linear-gradient(#ffffff,#f2f2f2 45%,#d9d9d9 55%,#ececec);border:1px solid #cdd8e5;border-radius:3px;text-align:center;line-height:17px;"><svg width="18" height="19" viewBox="0 0 18 19" style="position:absolute;left:-1px;top:-1px"><path d="M2.800 3h6.500l3 3v7h-9.500z" fill="#fdfdfd" stroke="#555" stroke-width="1.100"/><path d="M9.300 3v3h3" fill="none" stroke="#555"/><text x="8.300" y="15.300" font-size="9" font-weight="bold" font-family="Liberation Sans,sans-serif" fill="#333">D</text></svg></div>
<div class="abs " style="left:717px;top:1px;width:18px;height:19px;background:linear-gradient(#ffffff,#f2f2f2 45%,#d9d9d9 55%,#ececec);border:1px solid #cdd8e5;border-radius:3px;text-align:center;line-height:17px;"><svg width="18" height="19" viewBox="0 0 18 19" style="position:absolute;left:-1px;top:-1px"><path d="M7 2l2 2.300 2-2.300" stroke="#444" fill="none" stroke-width="1.100"/><rect x="3.500" y="4.500" width="10" height="8" fill="#f4f4f4" stroke="#444" stroke-width="1.200"/><rect x="5.500" y="6.500" width="5" height="4" fill="#c8d4ee" stroke="#555" stroke-width=".8"/><text x="9.800" y="15.300" font-size="9" font-weight="bold" font-family="Liberation Sans,sans-serif" fill="#333">R</text></svg></div>
<div class="abs " style="left:739px;top:1px;width:18px;height:19px;background:linear-gradient(#ffffff,#f2f2f2 45%,#d9d9d9 55%,#ececec);border:1px solid #cdd8e5;border-radius:3px;text-align:center;line-height:17px;"><svg width="18" height="19" viewBox="0 0 18 19" style="position:absolute;left:-1px;top:-1px"><rect x="2.300" y="5.300" width="9" height="10" fill="#f2f2f2" stroke="#444" stroke-width="1.200"/><path d="M9.500 10.500a2.700 2.700 0 1 1-2.700-2.700M8.300 12.500h2v-2" stroke="#666" fill="none" stroke-width="1.400"/><text x="9.300" y="9.400" font-size="9" font-weight="bold" font-family="Liberation Sans,sans-serif" fill="#e00000">R</text></svg></div>
<div class="abs " style="left:761px;top:1px;width:18px;height:19px;background:linear-gradient(#ffffff,#f2f2f2 45%,#d9d9d9 55%,#ececec);border:1px solid #cdd8e5;border-radius:3px;text-align:center;line-height:17px;"><svg width="18" height="19" viewBox="0 0 18 19" style="position:absolute;left:-1px;top:-1px"><rect x="2.300" y="8" width="8" height="7.300" fill="#f2f2f2" stroke="#444" stroke-width="1.200"/><rect x="4.600" y="4.800" width="8" height="7.600" fill="#f2f2f2" stroke="#444" stroke-width="1.200"/><text x="9.800" y="9.400" font-size="9" font-weight="bold" font-family="Liberation Sans,sans-serif" fill="#e00000">R</text></svg></div>
<div class="abs " style="left:788px;top:1px;width:19px;height:19px;background:linear-gradient(#ffffff,#f2f2f2 45%,#d9d9d9 55%,#ececec);border:1px solid #cdd8e5;border-radius:3px;text-align:center;line-height:17px;"><svg width="18" height="19" viewBox="0 0 18 19" style="position:absolute;left:-1px;top:-1px"><path d="M4.400 3.700h9.600v10h-9.600z" fill="#e6e6e6" stroke="#444" stroke-width="1.700"/><rect x="6.300" y="4" width="5.800" height="3" fill="#fff" stroke="#444" stroke-width="1.100"/><rect x="7" y="10" width="4.600" height="4" fill="#fff" stroke="#444" stroke-width="1.100"/></svg></div>
<div class="abs " style="left:811px;top:1px;width:19px;height:19px;background:linear-gradient(#ffffff,#f2f2f2 45%,#d9d9d9 55%,#ececec);border:1px solid #cdd8e5;border-radius:3px;text-align:center;line-height:17px;"><svg width="18" height="19" viewBox="0 0 18 19" style="position:absolute;left:-1px;top:-1px"><path d="M3.500 9.500h3l1 1h5v4.800h-9z" fill="#f2c12e" stroke="#b08a10" stroke-width=".9"/><path d="M3.500 15.300l2.200-4h9l-2.200 4z" fill="#ffe27a" stroke="#b08a10" stroke-width=".9"/><path d="M8.400 8c.3-2.600 2-3.800 4.300-3.900v-2.100l3.200 3.300-3.200 3.300v-2.100c-1.700 0-3 .3-4.300 1.500z" fill="#e00000"/></svg></div>
<svg class="abs" style="left:0;top:1009px" width="1645" height="17" viewBox="0 0 1645 17" shape-rendering="crispEdges"><rect x="0" y="0" width="1641" height="16" fill="#a5c1de"/><rect x="10" y="0" width="1403" height="16" fill="#c0c0c0"/><path d="M10 16L10 5L15 5L20 5L25 5L30 5L35 5L40 6L45 5L50 5L55 5L60 5L65 5L70 5L75 5L80 5L85 6L90 5L95 5L100 6L105 5L110 5L115 6L120 5L125 5L130 5L135 6L140 4L145 5L150 4L155 4L160 4L165 4L170 5L175 4L180 6L185 6L190 7L195 9L200 9L205 9L210 8L215 9L220 9L225 10L230 10L235 10L240 10L245 10L250 10L255 10L260 10L265 10L270 10L275 10L280 10L285 11L290 10L295 10L300 10L305 10L310 10L315 10L320 9L325 10L330 10L335 10L340 9L345 9L350 10L355 10L360 10L365 10L370 10L375 10L380 10L385 11L390 10L395 11L400 10L405 11L410 10L415 10L420 11L425 10L430 11L435 11L440 11L445 12L450 12L455 12L460 12L465 13L470 13L475 11L480 12L485 11L490 11L495 11L500 10L505 9L510 9L515 8L520 8L525 8L530 7L535 8L540 8L545 7L550 8L555 7L560 7L565 7L570 7L575 8L580 8L585 8L590 9L595 9L600 9L605 9L610 9L615 9L620 8L625 8L630 8L635 8L640 8L645 8L650 7L655 7L660 7L665 7L670 7L675 7L680 7L685 6L690 6L695 6L700 6L705 6L710 5L715 6L720 5L725 5L730 6L735 6L740 5L745 6L750 6L755 5L760 5L765 6L770 6L775 7L780 7L785 8L790 7L795 9L800 9L805 9L810 8L815 9L820 9L825 9L830 9L835 9L840 9L845 9L850 9L855 10L860 10L865 10L870 11L875 11L880 11L885 11L890 10L895 10L900 10L905 10L910 9L915 9L920 9L925 9L930 9L935 8L940 8L945 8L950 9L955 8L960 8L965 9L970 9L975 9L980 9L985 10L990 10L995 10L1000 10L1005 11L1010 10L1015 10L1020 10L1025 11L1030 10L1035 11L1040 12L1045 12L1050 13L1055 13L1060 14L1065 12L1070 13L1075 12L1080 11L1085 11L1090 11L1095 10L1100 10L1105 10L1110 10L1115 9L1120 10L1125 9L1130 9L1135 9L1140 9L1145 9L1150 9L1155 8L1160 8L1165 8L1170 8L1175 9L1180 8L1185 8L1190 9L1195 9L1200 9L1205 8L1210 9L1215 8L1220 8L1225 9L1230 9L1235 9L1240 9L1245 9L1250 7L1255 7L1260 8L1265 7L1270 6L1275 7L1280 7L1285 7L1290 8L1295 8L1300 9L1305 8L1310 9L1315 8L1320 8L1325 8L1330 9L1335 7L1340 6L1345 5L1350 5L1355 6L1360 5L1365 5L1370 5L1375 5L1380 5L1385 5L1390 5L1395 5L1400 5L1405 5L1410 4L1410 16z" fill="#505050"/><path d="M8 3v9l-7-4.500z" fill="#000" shape-rendering="auto"/><rect x="1411" y="0" width="16" height="16" fill="#303030"/><rect x="1412.500" y="1.500" width="2" height="13" fill="#fff" stroke="#000"/><rect x="1423.500" y="1.500" width="2" height="13" fill="#fff" stroke="#000"/><rect x="1428.5" y="0.500" width="16" height="15" fill="#a5c1de" stroke="#8fa9c6"/><rect x="1445.5" y="0.500" width="16" height="15" fill="#a5c1de" stroke="#8fa9c6"/><rect x="1463.5" y="0.500" width="17" height="15" fill="#a5c1de" stroke="#8fa9c6"/><g fill="#000" shape-rendering="auto"><path d="M1432 4v8l5-4z"/><path d="M1455 4v8l-5-4zM1460 4v8l-5-4z"/><path d="M1467 4v8l5-4zM1472 4v8l5-4z"/></g><rect x="1481.500" y="0.500" width="49" height="15" fill="#fff" stroke="#8a8a8a"/><text x="1529" y="13" text-anchor="end" font-size="12" font-family="Liberation Sans,sans-serif" shape-rendering="auto">757</text><g fill="#000" shape-rendering="auto"><path d="M1541 2v12l-7-6zM1543 2v12l7-6z"/><path d="M1554 2v12l6-6zM1567 2v12l-6-6z"/><circle cx="1578" cy="8" r="5.500" fill="#fff" stroke="#000" stroke-width="1.600"/><path d="M1575 8h6M1578 5v6" stroke="#000" stroke-width="1.600"/><circle cx="1596" cy="8" r="5.500" fill="none" stroke="#e8eef6" stroke-width="1.600"/><path d="M1592 8h8" stroke="#b0b0b0" stroke-width="1.600"/><rect x="1609.500" y="2.500" width="10" height="10" fill="none" stroke="#aeb8c4"/><path d="M1609 7.500h11M1614.500 2v11" stroke="#aeb8c4"/><path d="M1609 13.500h12v-11" stroke="#e8eef6" fill="none"/><rect x="1626" y="2.500" width="11" height="11" fill="#fff" stroke="#000" stroke-width="1.800"/><path d="M1626 2.500l11 11M1637 2.500l-11 11" stroke="#000" stroke-width="1"/></g></svg>
<svg class="abs" style="left:1582px;top:992px" width="16" height="16" viewBox="0 0 16 16"><rect x=".5" y=".5" width="14" height="14" fill="#ece9e2" stroke="#555"/><circle cx="6" cy="6" r="2.800" fill="#fff" stroke="#111" stroke-width="1.800"/><path d="M8 8l4.500 4" stroke="#111" stroke-width="2"/></svg>
<style>
#grid .hd{background:#f2f2f2;border-right:2px solid #cfcfd4;border-bottom:1px solid #a6a6a6;border-left:1px solid #fff;border-top:1px solid #fff;line-height:17px;white-space:nowrap;overflow:hidden;letter-spacing:.8px;}
#grid .row{left:0;width:649px;height:19px;}
#grid .r0{background:#fff;}
#grid .r1{background:#f1f1f1;}
#grid .c{top:0;height:19px;line-height:19px;border-right:1px solid #d9d9e0;white-space:nowrap;overflow:hidden;letter-spacing:.25px;}
#grid .r0 .c{border-top:1px solid #1a1a6a;}
#grid .r1 .c,#grid .first .c{border-top:1px solid #e4e4e8;}
#grid .pos{color:#a52020;}
#grid .neg{color:#101080;}
#grid .sel{background:#3390ff;color:#fff;}
#grid .sel .c{color:#fff;border-right-color:#e8a070;}
#grid .sb{background:#f0f0f0;border:1px solid #fff;border-right-color:#6a6a6a;border-bottom-color:#6a6a6a;box-shadow:inset -1px -1px 0 #a8a8a8;}
</style><div class="abs" id="dlg" style="left:0;top:41px;width:689px;height:746px;background:linear-gradient(#9dbad9 0,#a9c4e1 8px,#bcd3eb 24px,#b6cfe8 60px,#b3cce6 100%);border-right:1px solid #333;border-bottom:1px solid #333;">
<div class="abs" style="left:0;top:0;width:688px;height:1px;background:#333;"></div>
<div class="abs" style="left:0;top:1px;width:688px;height:744px;border-top:1px solid #fff;border-right:1px solid #dbe7f4;border-bottom:1px solid #dbe7f4;"></div>
<div class="abs" style="left:6px;top:11px;height:14px;line-height:14px;white-space:nowrap;letter-spacing:.6px;">시스템 성능 보고서</div>
<div class="abs" style="left:667px;top:10px;width:13px;height:13px;background:#c25b55;border:1px solid #6e2a26;border-radius:2px;"><svg width="11" height="11" viewBox="0 0 11 11" style="position:absolute;left:0;top:0"><path d="M3 3l5 5M8 3l-5 5" stroke="#fff" stroke-width="1.800"/></svg></div>
<div class="abs" style="left:6px;top:27px;width:675px;height:711px;background:#9ebbda;border:1px solid #74889e;border-right-color:#dfeaf5;border-bottom-color:#dfeaf5;"></div>
<div class="abs" style="left:12px;top:28px;height:14px;line-height:14px;white-space:nowrap;letter-spacing:1.1px;">종목명(시스템명)</div>
<div class="abs" style="left:138px;top:28px;height:14px;line-height:14px;white-space:nowrap;letter-spacing:.3px;">: KP200 선물연결(0 5포인트 buy)</div>
<div class="abs" style="left:12px;top:44px;height:14px;line-height:14px;white-space:nowrap;letter-spacing:1.1px;">주기(기간)</div>
<div class="abs" style="left:138px;top:44px;height:14px;line-height:14px;white-space:nowrap;letter-spacing:.3px;">: 10틱 (2018/08/01 ~ 2020/01/21)</div>
<svg class="abs" style="left:640px;top:33px" width="38" height="17" viewBox="0 0 38 17"><path d="M1.500 2.500h12v12h-12z" fill="#e8eef4" stroke="#555"/><path d="M3.500 2.500h8v4h-8z" fill="#fff" stroke="#555"/><path d="M3.500 9.500h8v5h-8z" fill="#fff" stroke="#777"/><path d="M24.500 1.500h7v9h-7z" fill="#fff" stroke="#666"/><path d="M26 3.500h4M26 5.500h4M26 7.500h2" stroke="#444"/><path d="M21.500 10.500h13v4h-13z" fill="#ddd" stroke="#666"/><path d="M30 12.500h1M32 12.500h1" stroke="#444"/></svg>
<div class="abs" style="left:10px;top:61px;width:667px;height:654px;background:#a8c4e2;border:2px solid #6f7f90;border-right-color:#e4edf6;border-bottom-color:#e4edf6;"></div>
<div class="abs" style="left:17px;top:66px;height:14px;line-height:14px;letter-spacing:.5px;white-space:nowrap;">진입명</div>
<div class="abs" style="left:57px;top:64px;width:149px;height:18px;background:#fff;border:1px solid #8c9cb0;line-height:16px;padding-left:3px;white-space:nowrap;letter-spacing:.5px;">모든 진입신호명<div class="abs" style="right:0;top:0;width:17px;height:16px;background:#f4f4f4;"></div><svg class="abs" style="right:5px;top:6px" width="7" height="4" viewBox="0 0 7 4"><path d="M0 0h7l-3.5 4z" fill="#000"/></svg></div>
<div class="abs" style="left:218px;top:66px;height:14px;line-height:14px;letter-spacing:.5px;white-space:nowrap;">청산명</div>
<div class="abs" style="left:257px;top:64px;width:149px;height:18px;background:#fff;border:1px solid #8c9cb0;line-height:16px;padding-left:3px;white-space:nowrap;letter-spacing:.5px;">모든 청산신호명<div class="abs" style="right:0;top:0;width:17px;height:16px;background:#f4f4f4;"></div><svg class="abs" style="right:5px;top:6px" width="7" height="4" viewBox="0 0 7 4"><path d="M0 0h7l-3.5 4z" fill="#000"/></svg></div>
<div class="abs" style="left:12px;top:83px;width:663px;height:629px;background:#fff;border:1px solid #6c6c6c;border-right:2px solid #7c7c7c;border-bottom:2px solid #7c7c7c;"></div><div class="abs" id="grid" style="left:13px;top:84px;width:660px;height:626px;background:#fff;overflow:hidden;">
<div class="abs hd" style="left:0px;top:0px;width:130px;height:19px;text-align:center;">진입일시</div>
<div class="abs hd" style="left:130px;top:0px;width:56px;height:19px;text-align:center;">진입종류</div>
<div class="abs hd" style="left:186px;top:0px;width:124px;height:19px;text-align:center;">진입명</div>
<div class="abs hd" style="left:310px;top:0px;width:80px;height:19px;text-align:center;">진입가격(Pt)</div>
<div class="abs hd" style="left:390px;top:0px;width:80px;height:19px;text-align:center;">수량</div>
<div class="abs hd" style="left:470px;top:0px;width:80px;height:19px;text-align:center;">수익률(%)</div>
<div class="abs hd" style="left:550px;top:0px;width:80px;height:19px;text-align:center;">최대수익(Pt)</div>
<div class="abs hd" style="left:630px;top:0px;width:19px;height:19px;text-align:left;padding-left:5px;">진</div>
<div class="abs hd" style="left:0px;top:19px;width:130px;height:19px;text-align:center;">청산일시</div>
<div class="abs hd" style="left:130px;top:19px;width:56px;height:19px;text-align:center;">청산종류</div>
<div class="abs hd" style="left:186px;top:19px;width:124px;height:19px;text-align:center;">청산명</div>
<div class="abs hd" style="left:310px;top:19px;width:80px;height:19px;text-align:center;">청산가격(Pt)</div>
<div class="abs hd" style="left:390px;top:19px;width:80px;height:19px;text-align:center;">수익(Pt)</div>
<div class="abs hd" style="left:470px;top:19px;width:80px;height:19px;text-align:center;">누적수익(Pt)</div>
<div class="abs hd" style="left:550px;top:19px;width:80px;height:19px;text-align:center;">최대손실(Pt)</div>
<div class="abs hd" style="left:630px;top:19px;width:19px;height:19px;text-align:left;padding-left:5px;">청</div>
<div class="abs row r0 first" style="top:37px;">
<div class="abs c" style="left:0px;width:130px;padding-left:7px;">2019/12/27 10:25:31</div>
<div class="abs c" style="left:130px;width:56px;padding-left:5px;">매수</div>
<div class="abs c" style="left:186px;width:124px;padding-left:5px;">b1</div>
<div class="abs c" style="left:310px;width:80px;text-align:right;padding-right:5px;">295.00</div>
<div class="abs c" style="left:390px;width:80px;text-align:right;padding-right:5px;">1</div>
<div class="abs c neg" style="left:470px;width:80px;text-align:right;padding-right:5px;">-0.01</div>
<div class="abs c pos" style="left:550px;width:80px;text-align:right;padding-right:5px;">3.10</div>
<div class="abs c" style="left:630px;width:19px;"></div>
</div>
<div class="abs row r1" style="top:56px;">
<div class="abs c" style="left:0px;width:130px;padding-left:7px;">2019/12/27 14:41:23</div>
<div class="abs c" style="left:130px;width:56px;padding-left:5px;">매수청산</div>
<div class="abs c" style="left:186px;width:124px;padding-left:5px;">StopTrailing</div>
<div class="abs c" style="left:310px;width:80px;text-align:right;padding-right:5px;">295.10</div>
<div class="abs c neg" style="left:390px;width:80px;text-align:right;padding-right:5px;">-0.02</div>
<div class="abs c neg" style="left:470px;width:80px;text-align:right;padding-right:5px;">-28.17</div>
<div class="abs c neg" style="left:550px;width:80px;text-align:right;padding-right:5px;">-0.05</div>
<div class="abs c" style="left:630px;width:19px;"></div>
</div>
<div class="abs row r0" style="top:75px;">
<div class="abs c" style="left:0px;width:130px;padding-left:7px;">2019/12/27 14:44:24</div>
<div class="abs c" style="left:130px;width:56px;padding-left:5px;">매수</div>
<div class="abs c" style="left:186px;width:124px;padding-left:5px;">b1</div>
<div class="abs c" style="left:310px;width:80px;text-align:right;padding-right:5px;">295.00</div>
<div class="abs c" style="left:390px;width:80px;text-align:right;padding-right:5px;">1</div>
<div class="abs c pos" style="left:470px;width:80px;text-align:right;padding-right:5px;">0.08</div>
<div class="abs c pos" style="left:550px;width:80px;text-align:right;padding-right:5px;">1.20</div>
<div class="abs c" style="left:630px;width:19px;"></div>
</div>
<div class="abs row r1" style="top:94px;">
<div class="abs c" style="left:0px;width:130px;padding-left:7px;">2019/12/27 15:17:07</div>
<div class="abs c" style="left:130px;width:56px;padding-left:5px;">매수청산</div>
<div class="abs c" style="left:186px;width:124px;padding-left:5px;">StopEndOfDay</div>
<div class="abs c" style="left:310px;width:80px;text-align:right;padding-right:5px;">295.35</div>
<div class="abs c pos" style="left:390px;width:80px;text-align:right;padding-right:5px;">0.23</div>
<div class="abs c neg" style="left:470px;width:80px;text-align:right;padding-right:5px;">-27.94</div>
<div class="abs c neg" style="left:550px;width:80px;text-align:right;padding-right:5px;">-0.15</div>
<div class="abs c" style="left:630px;width:19px;"></div>
</div>
<div class="abs row r0" style="top:113px;">
<div class="abs c" style="left:0px;width:130px;padding-left:7px;">2019/12/30 14:43:56</div>
<div class="abs c" style="left:130px;width:56px;padding-left:5px;">매수</div>
<div class="abs c" style="left:186px;width:124px;padding-left:5px;">b1</div>
<div class="abs c" style="left:310px;width:80px;text-align:right;padding-right:5px;">295.00</div>
<div class="abs c" style="left:390px;width:80px;text-align:right;padding-right:5px;">1</div>
<div class="abs c neg" style="left:470px;width:80px;text-align:right;padding-right:5px;">-0.01</div>
<div class="abs c pos" style="left:550px;width:80px;text-align:right;padding-right:5px;">0.70</div>
<div class="abs c" style="left:630px;width:19px;"></div>
</div>
<div class="abs row r1" style="top:132px;">
<div class="abs c" style="left:0px;width:130px;padding-left:7px;">2019/12/30 15:17:04</div>
<div class="abs c" style="left:130px;width:56px;padding-left:5px;">매수청산</div>
<div class="abs c" style="left:186px;width:124px;padding-left:5px;">StopEndOfDay</div>
<div class="abs c" style="left:310px;width:80px;text-align:right;padding-right:5px;">295.10</div>
<div class="abs c neg" style="left:390px;width:80px;text-align:right;padding-right:5px;">-0.02</div>
<div class="abs c neg" style="left:470px;width:80px;text-align:right;padding-right:5px;">-27.96</div>
<div class="abs c neg" style="left:550px;width:80px;text-align:right;padding-right:5px;">-0.15</div>
<div class="abs c" style="left:630px;width:19px;"></div>
</div>
<div class="abs row r0" style="top:151px;">
<div class="abs c" style="left:0px;width:130px;padding-left:7px;">2020/01/02 10:00:03</div>
<div class="abs c" style="left:130px;width:56px;padding-left:5px;">매수</div>
<div class="abs c" style="left:186px;width:124px;padding-left:5px;">b1</div>
<div class="abs c" style="left:310px;width:80px;text-align:right;padding-right:5px;">295.00</div>
<div class="abs c" style="left:390px;width:80px;text-align:right;padding-right:5px;">1</div>
<div class="abs c neg" style="left:470px;width:80px;text-align:right;padding-right:5px;">-0.38</div>
<div class="abs c pos" style="left:550px;width:80px;text-align:right;padding-right:5px;">0.55</div>
<div class="abs c" style="left:630px;width:19px;"></div>
</div>
<div class="abs row r1" style="top:170px;">
<div class="abs c" style="left:0px;width:130px;padding-left:7px;">2020/01/02 10:07:00</div>
<div class="abs c" style="left:130px;width:56px;padding-left:5px;">매수청산</div>
<div class="abs c" style="left:186px;width:124px;padding-left:5px;">StopLoss</div>
<div class="abs c" style="left:310px;width:80px;text-align:right;padding-right:5px;">294.00</div>
<div class="abs c neg" style="left:390px;width:80px;text-align:right;padding-right:5px;">-1.12</div>
<div class="abs c neg" style="left:470px;width:80px;text-align:right;padding-right:5px;">-29.07</div>
<div class="abs c neg" style="left:550px;width:80px;text-align:right;padding-right:5px;">-1.00</div>
<div class="abs c" style="left:630px;width:19px;"></div>
</div>
<div class="abs row r0" style="top:189px;">
<div class="abs c" style="left:0px;width:130px;padding-left:7px;">2020/01/03 09:06:22</div>
<div class="abs c" style="left:130px;width:56px;padding-left:5px;">매수</div>
<div class="abs c" style="left:186px;width:124px;padding-left:5px;">b1</div>
<div class="abs c" style="left:310px;width:80px;text-align:right;padding-right:5px;">295.00</div>
<div class="abs c" style="left:390px;width:80px;text-align:right;padding-right:5px;">1</div>
<div class="abs c neg" style="left:470px;width:80px;text-align:right;padding-right:5px;">-0.38</div>
<div class="abs c pos" style="left:550px;width:80px;text-align:right;padding-right:5px;">0.55</div>
<div class="abs c" style="left:630px;width:19px;"></div>
</div>
<div class="abs row r1" style="top:208px;">
<div class="abs c" style="left:0px;width:130px;padding-left:7px;">2020/01/03 10:48:06</div>
<div class="abs c" style="left:130px;width:56px;padding-left:5px;">매수청산</div>
<div class="abs c" style="left:186px;width:124px;padding-left:5px;">StopLoss</div>
<div class="abs c" style="left:310px;width:80px;text-align:right;padding-right:5px;">294.00</div>
<div class="abs c neg" style="left:390px;width:80px;text-align:right;padding-right:5px;">-1.12</div>
<div class="abs c neg" style="left:470px;width:80px;text-align:right;padding-right:5px;">-30.19</div>
<div class="abs c neg" style="left:550px;width:80px;text-align:right;padding-right:5px;">-1.00</div>
<div class="abs c" style="left:630px;width:19px;"></div>
</div>
<div class="abs row r0" style="top:227px;">
<div class="abs c" style="left:0px;width:130px;padding-left:7px;">2020/01/03 12:21:04</div>
<div class="abs c" style="left:130px;width:56px;padding-left:5px;">매수</div>
<div class="abs c" style="left:186px;width:124px;padding-left:5px;">b1</div>
<div class="abs c" style="left:310px;width:80px;text-align:right;padding-right:5px;">290.00</div>
<div class="abs c" style="left:390px;width:80px;text-align:right;padding-right:5px;">1</div>
<div class="abs c pos" style="left:470px;width:80px;text-align:right;padding-right:5px;">0.30</div>
<div class="abs c pos" style="left:550px;width:80px;text-align:right;padding-right:5px;">2.30</div>
<div class="abs c" style="left:630px;width:19px;"></div>
</div>
<div class="abs row r1" style="top:246px;">
<div class="abs c" style="left:0px;width:130px;padding-left:7px;">2020/01/03 15:17:05</div>
<div class="abs c" style="left:130px;width:56px;padding-left:5px;">매수청산</div>
<div class="abs c" style="left:186px;width:124px;padding-left:5px;">StopEndOfDay</div>
<div class="abs c" style="left:310px;width:80px;text-align:right;padding-right:5px;">291.00</div>
<div class="abs c pos" style="left:390px;width:80px;text-align:right;padding-right:5px;">0.88</div>
<div class="abs c neg" style="left:470px;width:80px;text-align:right;padding-right:5px;">-29.31</div>
<div class="abs c neg" style="left:550px;width:80px;text-align:right;padding-right:5px;">-0.35</div>
<div class="abs c" style="left:630px;width:19px;"></div>
</div>
<div class="abs row r0" style="top:265px;">
<div class="abs c" style="left:0px;width:130px;padding-left:7px;">2020/01/06 09:31:57</div>
<div class="abs c" style="left:130px;width:56px;padding-left:5px;">매수</div>
<div class="abs c" style="left:186px;width:124px;padding-left:5px;">b1</div>
<div class="abs c" style="left:310px;width:80px;text-align:right;padding-right:5px;">290.00</div>
<div class="abs c" style="left:390px;width:80px;text-align:right;padding-right:5px;">1</div>
<div class="abs c neg" style="left:470px;width:80px;text-align:right;padding-right:5px;">-0.39</div>
<div class="abs c pos" style="left:550px;width:80px;text-align:right;padding-right:5px;">0.10</div>
<div class="abs c" style="left:630px;width:19px;"></div>
</div>
<div class="abs row r1" style="top:284px;">
<div class="abs c" style="left:0px;width:130px;padding-left:7px;">2020/01/06 09:54:21</div>
<div class="abs c" style="left:130px;width:56px;padding-left:5px;">매수청산</div>
<div class="abs c" style="left:186px;width:124px;padding-left:5px;">StopLoss</div>
<div class="abs c" style="left:310px;width:80px;text-align:right;padding-right:5px;">289.00</div>
<div class="abs c neg" style="left:390px;width:80px;text-align:right;padding-right:5px;">-1.12</div>
<div class="abs c neg" style="left:470px;width:80px;text-align:right;padding-right:5px;">-30.43</div>
<div class="abs c neg" style="left:550px;width:80px;text-align:right;padding-right:5px;">-1.00</div>
<div class="abs c" style="left:630px;width:19px;"></div>
</div>
<div class="abs row r0" style="top:303px;">
<div class="abs c" style="left:0px;width:130px;padding-left:7px;">2020/01/08 09:00:00</div>
<div class="abs c" style="left:130px;width:56px;padding-left:5px;">매수</div>
<div class="abs c" style="left:186px;width:124px;padding-left:5px;">b1</div>
<div class="abs c" style="left:310px;width:80px;text-align:right;padding-right:5px;">290.00</div>
<div class="abs c" style="left:390px;width:80px;text-align:right;padding-right:5px;">1</div>
<div class="abs c neg" style="left:470px;width:80px;text-align:right;padding-right:5px;">-0.39</div>
<div class="abs c pos" style="left:550px;width:80px;text-align:right;padding-right:5px;">0.25</div>
<div class="abs c" style="left:630px;width:19px;"></div>
</div>
<div class="abs row r1" style="top:322px;">
<div class="abs c" style="left:0px;width:130px;padding-left:7px;">2020/01/08 09:11:52</div>
<div class="abs c" style="left:130px;width:56px;padding-left:5px;">매수청산</div>
<div class="abs c" style="left:186px;width:124px;padding-left:5px;">StopLoss</div>
<div class="abs c" style="left:310px;width:80px;text-align:right;padding-right:5px;">289.00</div>
<div class="abs c neg" style="left:390px;width:80px;text-align:right;padding-right:5px;">-1.12</div>
<div class="abs c neg" style="left:470px;width:80px;text-align:right;padding-right:5px;">-31.55</div>
<div class="abs c neg" style="left:550px;width:80px;text-align:right;padding-right:5px;">-1.00</div>
<div class="abs c" style="left:630px;width:19px;"></div>
</div>
<div class="abs row r0" style="top:341px;">
<div class="abs c" style="left:0px;width:130px;padding-left:7px;">2020/01/08 11:14:46</div>
<div class="abs c" style="left:130px;width:56px;padding-left:5px;">매수</div>
<div class="abs c" style="left:186px;width:124px;padding-left:5px;">b1</div>
<div class="abs c" style="left:310px;width:80px;text-align:right;padding-right:5px;">290.00</div>
<div class="abs c" style="left:390px;width:80px;text-align:right;padding-right:5px;">1</div>
<div class="abs c pos" style="left:470px;width:80px;text-align:right;padding-right:5px;">0.01</div>
<div class="abs c pos" style="left:550px;width:80px;text-align:right;padding-right:5px;">1.65</div>
<div class="abs c" style="left:630px;width:19px;"></div>
</div>
<div class="abs row r1" style="top:360px;">
<div class="abs c" style="left:0px;width:130px;padding-left:7px;">2020/01/08 15:17:05</div>
<div class="abs c" style="left:130px;width:56px;padding-left:5px;">매수청산</div>
<div class="abs c" style="left:186px;width:124px;padding-left:5px;">StopEndOfDay</div>
<div class="abs c" style="left:310px;width:80px;text-align:right;padding-right:5px;">290.15</div>
<div class="abs c pos" style="left:390px;width:80px;text-align:right;padding-right:5px;">0.03</div>
<div class="abs c neg" style="left:470px;width:80px;text-align:right;padding-right:5px;">-31.52</div>
<div class="abs c neg" style="left:550px;width:80px;text-align:right;padding-right:5px;">-0.40</div>
<div class="abs c" style="left:630px;width:19px;"></div>
</div>
<div class="abs row r0" style="top:379px;">
<div class="abs c" style="left:0px;width:130px;padding-left:7px;">2020/01/10 09:00:19</div>
<div class="abs c" style="left:130px;width:56px;padding-left:5px;">매수</div>
<div class="abs c" style="left:186px;width:124px;padding-left:5px;">b1</div>
<div class="abs c" style="left:310px;width:80px;text-align:right;padding-right:5px;">295.00</div>
<div class="abs c" style="left:390px;width:80px;text-align:right;padding-right:5px;">1</div>
<div class="abs c pos" style="left:470px;width:80px;text-align:right;padding-right:5px;">0.81</div>
<div class="abs c pos" style="left:550px;width:80px;text-align:right;padding-right:5px;">2.70</div>
<div class="abs c" style="left:630px;width:19px;"></div>
</div>
<div class="abs row r1" style="top:398px;">
<div class="abs c" style="left:0px;width:130px;padding-left:7px;">2020/01/10 15:17:17</div>
<div class="abs c" style="left:130px;width:56px;padding-left:5px;">매수청산</div>
<div class="abs c" style="left:186px;width:124px;padding-left:5px;">StopEndOfDay</div>
<div class="abs c" style="left:310px;width:80px;text-align:right;padding-right:5px;">297.50</div>
<div class="abs c pos" style="left:390px;width:80px;text-align:right;padding-right:5px;">2.38</div>
<div class="abs c neg" style="left:470px;width:80px;text-align:right;padding-right:5px;">-29.14</div>
<div class="abs c neg" style="left:550px;width:80px;text-align:right;padding-right:5px;">-0.20</div>
<div class="abs c" style="left:630px;width:19px;"></div>
</div>
<div class="abs row r0" style="top:417px;">
<div class="abs c" style="left:0px;width:130px;padding-left:7px;">2020/01/13 12:01:16</div>
<div class="abs c" style="left:130px;width:56px;padding-left:5px;">매수</div>
<div class="abs c" style="left:186px;width:124px;padding-left:5px;">b1</div>
<div class="abs c" style="left:310px;width:80px;text-align:right;padding-right:5px;">300.00</div>
<div class="abs c" style="left:390px;width:80px;text-align:right;padding-right:5px;">1</div>
<div class="abs c pos" style="left:470px;width:80px;text-align:right;padding-right:5px;">0.16</div>
<div class="abs c pos" style="left:550px;width:80px;text-align:right;padding-right:5px;">0.65</div>
<div class="abs c" style="left:630px;width:19px;"></div>
</div>
<div class="abs row r1" style="top:436px;">
<div class="abs c" style="left:0px;width:130px;padding-left:7px;">2020/01/13 15:17:06</div>
<div class="abs c" style="left:130px;width:56px;padding-left:5px;">매수청산</div>
<div class="abs c" style="left:186px;width:124px;padding-left:5px;">StopEndOfDay</div>
<div class="abs c" style="left:310px;width:80px;text-align:right;padding-right:5px;">300.60</div>
<div class="abs c pos" style="left:390px;width:80px;text-align:right;padding-right:5px;">0.48</div>
<div class="abs c neg" style="left:470px;width:80px;text-align:right;padding-right:5px;">-28.66</div>
<div class="abs c neg" style="left:550px;width:80px;text-align:right;padding-right:5px;">-0.70</div>
<div class="abs c" style="left:630px;width:19px;"></div>
</div>
<div class="abs row r0" style="top:455px;">
<div class="abs c" style="left:0px;width:130px;padding-left:7px;">2020/01/15 09:01:54</div>
<div class="abs c" style="left:130px;width:56px;padding-left:5px;">매수</div>
<div class="abs c" style="left:186px;width:124px;padding-left:5px;">b1</div>
<div class="abs c" style="left:310px;width:80px;text-align:right;padding-right:5px;">300.00</div>
<div class="abs c" style="left:390px;width:80px;text-align:right;padding-right:5px;">1</div>
<div class="abs c neg" style="left:470px;width:80px;text-align:right;padding-right:5px;">-0.01</div>
<div class="abs c pos" style="left:550px;width:80px;text-align:right;padding-right:5px;">1.55</div>
<div class="abs c" style="left:630px;width:19px;"></div>
</div>
<div class="abs row r1" style="top:474px;">
<div class="abs c" style="left:0px;width:130px;padding-left:7px;">2020/01/15 15:17:18</div>
<div class="abs c" style="left:130px;width:56px;padding-left:5px;">매수청산</div>
<div class="abs c" style="left:186px;width:124px;padding-left:5px;">StopEndOfDay</div>
<div class="abs c" style="left:310px;width:80px;text-align:right;padding-right:5px;">300.10</div>
<div class="abs c neg" style="left:390px;width:80px;text-align:right;padding-right:5px;">-0.02</div>
<div class="abs c neg" style="left:470px;width:80px;text-align:right;padding-right:5px;">-28.68</div>
<div class="abs c neg" style="left:550px;width:80px;text-align:right;padding-right:5px;">-0.50</div>
<div class="abs c" style="left:630px;width:19px;"></div>
</div>
<div class="abs row r0" style="top:493px;">
<div class="abs c" style="left:0px;width:130px;padding-left:7px;">2020/01/16 09:00:07</div>
<div class="abs c" style="left:130px;width:56px;padding-left:5px;">매수</div>
<div class="abs c" style="left:186px;width:124px;padding-left:5px;">b1</div>
<div class="abs c" style="left:310px;width:80px;text-align:right;padding-right:5px;">300.00</div>
<div class="abs c" style="left:390px;width:80px;text-align:right;padding-right:5px;">1</div>
<div class="abs c pos" style="left:470px;width:80px;text-align:right;padding-right:5px;">1.01</div>
<div class="abs c pos" style="left:550px;width:80px;text-align:right;padding-right:5px;">3.20</div>
<div class="abs c" style="left:630px;width:19px;"></div>
</div>
<div class="abs row r1" style="top:512px;">
<div class="abs c" style="left:0px;width:130px;padding-left:7px;">2020/01/16 15:17:09</div>
<div class="abs c" style="left:130px;width:56px;padding-left:5px;">매수청산</div>
<div class="abs c" style="left:186px;width:124px;padding-left:5px;">StopEndOfDay</div>
<div class="abs c" style="left:310px;width:80px;text-align:right;padding-right:5px;">303.15</div>
<div class="abs c pos" style="left:390px;width:80px;text-align:right;padding-right:5px;">3.03</div>
<div class="abs c neg" style="left:470px;width:80px;text-align:right;padding-right:5px;">-25.64</div>
<div class="abs c neg" style="left:550px;width:80px;text-align:right;padding-right:5px;">-0.35</div>
<div class="abs c" style="left:630px;width:19px;"></div>
</div>
<div class="abs row r0 sel" style="top:531px;">
<div class="abs c" style="left:0px;width:130px;padding-left:7px;">2020/01/17 09:00:00</div>
<div class="abs c" style="left:130px;width:56px;padding-left:5px;">매수</div>
<div class="abs c" style="left:186px;width:124px;padding-left:5px;">b1</div>
<div class="abs c" style="left:310px;width:80px;text-align:right;padding-right:5px;">305.00</div>
<div class="abs c" style="left:390px;width:80px;text-align:right;padding-right:5px;">1</div>
<div class="abs c neg" style="left:470px;width:80px;text-align:right;padding-right:5px;">-0.37</div>
<div class="abs c pos" style="left:550px;width:80px;text-align:right;padding-right:5px;">1.50</div>
<div class="abs c" style="left:630px;width:19px;"></div>
</div>
<div class="abs row r1" style="top:550px;">
<div class="abs c" style="left:0px;width:130px;padding-left:7px;">2020/01/17 09:55:58</div>
<div class="abs c" style="left:130px;width:56px;padding-left:5px;">매수청산</div>
<div class="abs c" style="left:186px;width:124px;padding-left:5px;">StopLoss</div>
<div class="abs c" style="left:310px;width:80px;text-align:right;padding-right:5px;">304.00</div>
<div class="abs c neg" style="left:390px;width:80px;text-align:right;padding-right:5px;">-1.12</div>
<div class="abs c neg" style="left:470px;width:80px;text-align:right;padding-right:5px;">-26.76</div>
<div class="abs c neg" style="left:550px;width:80px;text-align:right;padding-right:5px;">-1.00</div>
<div class="abs c" style="left:630px;width:19px;"></div>
</div>
<div class="abs row r0" style="top:569px;">
<div class="abs c" style="left:0px;width:130px;padding-left:7px;">2020/01/21 10:12:19</div>
<div class="abs c" style="left:130px;width:56px;padding-left:5px;">매수</div>
<div class="abs c" style="left:186px;width:124px;padding-left:5px;">b1</div>
<div class="abs c" style="left:310px;width:80px;text-align:right;padding-right:5px;">305.00</div>
<div class="abs c" style="left:390px;width:80px;text-align:right;padding-right:5px;">1</div>
<div class="abs c neg" style="left:470px;width:80px;text-align:right;padding-right:5px;">-0.37</div>
<div class="abs c pos" style="left:550px;width:80px;text-align:right;padding-right:5px;">0.05</div>
<div class="abs c" style="left:630px;width:19px;"></div>
</div>
<div class="abs row r1" style="top:588px;">
<div class="abs c" style="left:0px;width:130px;padding-left:7px;">2020/01/21 10:40:53</div>
<div class="abs c" style="left:130px;width:56px;padding-left:5px;">매수청산</div>
<div class="abs c" style="left:186px;width:124px;padding-left:5px;">StopLoss</div>
<div class="abs c" style="left:310px;width:80px;text-align:right;padding-right:5px;">304.00</div>
<div class="abs c neg" style="left:390px;width:80px;text-align:right;padding-right:5px;">-1.12</div>
<div class="abs c neg" style="left:470px;width:80px;text-align:right;padding-right:5px;">-27.88</div>
<div class="abs c neg" style="left:550px;width:80px;text-align:right;padding-right:5px;">-1.00</div>
<div class="abs c" style="left:630px;width:19px;"></div>
</div>
<div class="abs row r0 first" style="top:607px;height:10px;"><div class="abs c" style="left:0px;width:130px;height:10px;"></div><div class="abs c" style="left:130px;width:56px;height:10px;"></div><div class="abs c" style="left:186px;width:124px;height:10px;"></div><div class="abs c" style="left:310px;width:80px;height:10px;"></div><div class="abs c" style="left:390px;width:80px;height:10px;"></div><div class="abs c" style="left:470px;width:80px;height:10px;"></div><div class="abs c" style="left:550px;width:80px;height:10px;"></div><div class="abs c" style="left:630px;width:19px;height:10px;"></div></div>
<div class="abs" style="left:649px;top:0;width:11px;height:618px;background:#f0f0f0;border-left:1px solid #e2e2e2;"></div>
<div class="abs sb" style="left:649px;top:0;width:11px;height:18px;"><svg width="9" height="16" viewBox="0 0 9 16"><path d="M2.500 9h4l-2-2.500z" fill="#000"/></svg></div>
<div class="abs sb" style="left:649px;top:562px;width:11px;height:37px;"></div>
<div class="abs sb" style="left:649px;top:599px;width:11px;height:16px;"><svg width="9" height="14" viewBox="0 0 9 14"><path d="M2.500 5.500h4l-2 2.500z" fill="#000"/></svg></div>
<div class="abs" style="left:0;top:616px;width:660px;height:10px;background:#f0f0f0;border-top:1px solid #e2e2e2;"></div>
<div class="abs sb" style="left:0;top:616px;width:17px;height:10px;"><svg width="15" height="8" viewBox="0 0 15 9" style="display:block"><path d="M8.500 2v5l-3-2.500z" fill="#000"/></svg></div>
<div class="abs sb" style="left:17px;top:616px;width:547px;height:10px;"></div>
<div class="abs sb" style="left:633px;top:616px;width:16px;height:10px;"><svg width="14" height="8" viewBox="0 0 14 9" style="display:block"><path d="M5.500 2v5l3-2.500z" fill="#000"/></svg></div>
<div class="abs sb" style="left:649px;top:616px;width:11px;height:10px;"></div>
</div>
<div class="abs" style="left:7px;top:718px;width:673px;height:1px;background:#8195ab;"></div>
<div class="abs" style="left:10px;top:719px;width:41px;height:16px;background:#c9c5bc;border:1px solid #7a7a72;border-top:none;border-radius:0 0 4px 4px;text-align:center;line-height:14px;letter-spacing:.4px;white-space:nowrap;">종합</div>
<div class="abs" style="left:52px;top:719px;width:59px;height:16px;background:#fff;border:1px solid #7a7a72;border-top:none;border-radius:0 0 4px 4px;text-align:center;line-height:14px;letter-spacing:.4px;white-space:nowrap;border-color:#fff #9a9a9a #9a9a9a;">거래내역</div>
<div class="abs" style="left:112px;top:719px;width:59px;height:16px;background:#c9c5bc;border:1px solid #7a7a72;border-top:none;border-radius:0 0 4px 4px;text-align:center;line-height:14px;letter-spacing:.4px;white-space:nowrap;">기간분석</div>
<div class="abs" style="left:172px;top:719px;width:59px;height:16px;background:#c9c5bc;border:1px solid #7a7a72;border-top:none;border-radius:0 0 4px 4px;text-align:center;line-height:14px;letter-spacing:.4px;white-space:nowrap;">전략분석</div>
<div class="abs" style="left:232px;top:719px;width:83px;height:16px;background:#c9c5bc;border:1px solid #7a7a72;border-top:none;border-radius:0 0 4px 4px;text-align:center;line-height:14px;letter-spacing:.4px;white-space:nowrap;">수익손실거래</div>
<div class="abs" style="left:315px;top:719px;width:48px;height:16px;background:#c9c5bc;border:1px solid #7a7a72;border-top:none;border-radius:0 0 4px 4px;text-align:center;line-height:14px;letter-spacing:.4px;white-space:nowrap;">그래프</div>
<div class="abs" style="left:364px;top:719px;width:42px;height:16px;background:#c9c5bc;border:1px solid #7a7a72;border-top:none;border-radius:0 0 4px 4px;text-align:center;line-height:14px;letter-spacing:.4px;white-space:nowrap;">설정</div>
</div>
</body></html>
